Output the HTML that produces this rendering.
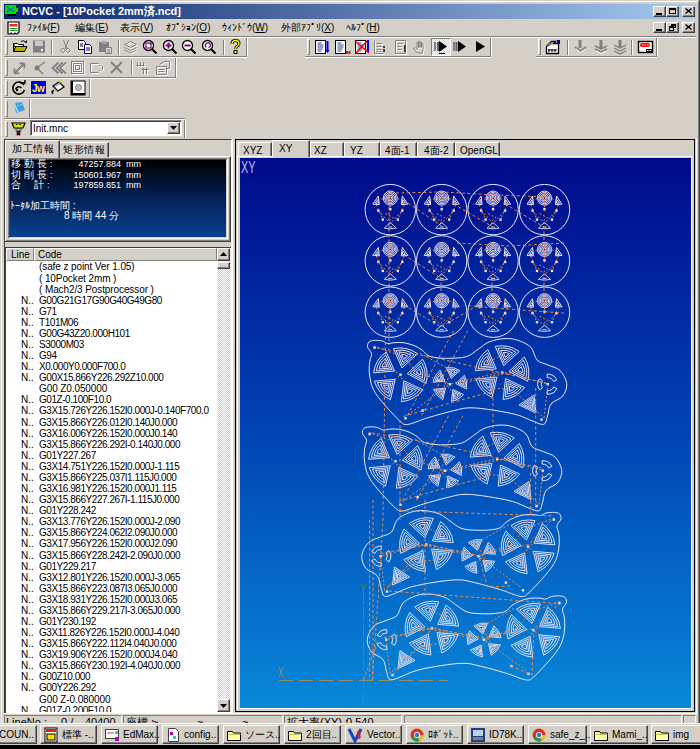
<!DOCTYPE html>
<html><head><meta charset="utf-8"><style>
html,body{margin:0;padding:0;width:700px;height:749px;overflow:hidden;background:#d4d0c8;}
body{position:relative;font-family:"Liberation Sans",sans-serif;}
.t{position:absolute;white-space:pre;font-size:11px;line-height:12px;color:#000;}
svg{overflow:visible}
</style></head><body>
<div style="position:absolute;left:0px;top:0px;width:700px;height:1px;background:#d4d0c8"></div><div style="position:absolute;left:1px;top:1px;width:698px;height:1px;background:#fff"></div><div style="position:absolute;left:1px;top:1px;width:1px;height:723px;background:#fff"></div><div style="position:absolute;left:698px;top:1px;width:1px;height:723px;background:#808080"></div><div style="position:absolute;left:699px;top:0px;width:1px;height:724px;background:#404040"></div><div style="position:absolute;left:4px;top:4px;width:692px;height:15px;background:linear-gradient(to right,#0a246a,#a6caf0)"></div><svg style="position:absolute;left:5px;top:5px" width="15" height="13" viewBox="0 0 15 13"><rect x="0" y="0" width="11" height="9" fill="#00e000"/><rect x="11" y="3" width="2" height="4" fill="#00e000"/><path d="M2 2 L9 7 M9 2 L2 7" stroke="#0060c0" stroke-width="1.2"/><path d="M3 10 h8" stroke="#000" stroke-width="2"/></svg><div class="t" style="left:22px;top:5px;color:#fff;font-weight:bold;font-size:11px;line-height:13px">NCVC - [10Pocket 2mm済.ncd]</div><div style="position:absolute;left:653px;top:6px;width:13px;height:11px;background:#d4d0c8;border-top:1px solid #fff;border-left:1px solid #fff;border-right:1px solid #404040;border-bottom:1px solid #404040;box-sizing:border-box;box-shadow:inset -1px -1px 0 #808080"></div><div style="position:absolute;left:656px;top:13px;width:6px;height:2px;background:#000"></div><div style="position:absolute;left:666px;top:6px;width:13px;height:11px;background:#d4d0c8;border-top:1px solid #fff;border-left:1px solid #fff;border-right:1px solid #404040;border-bottom:1px solid #404040;box-sizing:border-box;box-shadow:inset -1px -1px 0 #808080"></div><div style="position:absolute;left:669px;top:8px;width:7px;height:6px;border:1px solid #000;border-top-width:2px;box-sizing:border-box"></div><div style="position:absolute;left:682px;top:6px;width:13px;height:11px;background:#d4d0c8;border-top:1px solid #fff;border-left:1px solid #fff;border-right:1px solid #404040;border-bottom:1px solid #404040;box-sizing:border-box;box-shadow:inset -1px -1px 0 #808080"></div><svg style="position:absolute;left:685px;top:8px" width="7" height="6" viewBox="0 0 7 6"><path d="M0.5 0.5 L6.5 5.5 M6.5 0.5 L0.5 5.5" stroke="#000" stroke-width="1.5"/></svg><svg style="position:absolute;left:7px;top:21px" width="14" height="14" viewBox="0 0 14 14"><path d="M1 1 h11 v10 l-2 2 h-1 l-1 -1 l-1 1 h-2 l-1 -1 l-1 1 h-2 z" fill="#fff" stroke="#000" stroke-width="1.2"/><rect x="2.5" y="3" width="8" height="2.5" fill="#ff2020"/><rect x="2.5" y="7" width="8" height="1.2" fill="#20a020"/><rect x="2.5" y="9" width="8" height="1" fill="#20a020"/></svg><div class="t" style="left:27px;top:22px;font-size:10px;line-height:11px">ﾌｧｲﾙ(<u>F</u>)</div><div class="t" style="left:75px;top:22px;font-size:10px;line-height:11px">編集(<u>E</u>)</div><div class="t" style="left:120px;top:22px;font-size:10px;line-height:11px">表示(<u>V</u>)</div><div class="t" style="left:166px;top:22px;font-size:10px;line-height:11px">ｵﾌﾟｼｮﾝ(<u>O</u>)</div><div class="t" style="left:222px;top:22px;font-size:10px;line-height:11px">ｳｨﾝﾄﾞｳ(<u>W</u>)</div><div class="t" style="left:281px;top:22px;font-size:10px;line-height:11px">外部ｱﾌﾟﾘ(<u>X</u>)</div><div class="t" style="left:346px;top:22px;font-size:10px;line-height:11px">ﾍﾙﾌﾟ(<u>H</u>)</div><div style="position:absolute;left:653px;top:22px;width:13px;height:11px;background:#d4d0c8;border-top:1px solid #fff;border-left:1px solid #fff;border-right:1px solid #404040;border-bottom:1px solid #404040;box-sizing:border-box;box-shadow:inset -1px -1px 0 #808080"></div><div style="position:absolute;left:656px;top:29px;width:6px;height:2px;background:#000"></div><div style="position:absolute;left:666px;top:22px;width:13px;height:11px;background:#d4d0c8;border-top:1px solid #fff;border-left:1px solid #fff;border-right:1px solid #404040;border-bottom:1px solid #404040;box-sizing:border-box;box-shadow:inset -1px -1px 0 #808080"></div><div style="position:absolute;left:671px;top:24px;width:5px;height:4px;border:1px solid #000;border-top-width:2px;box-sizing:border-box"></div><div style="position:absolute;left:669px;top:26px;width:5px;height:5px;background:#d4d0c8;border:1px solid #000;border-top-width:2px;box-sizing:border-box"></div><div style="position:absolute;left:682px;top:22px;width:13px;height:11px;background:#d4d0c8;border-top:1px solid #fff;border-left:1px solid #fff;border-right:1px solid #404040;border-bottom:1px solid #404040;box-sizing:border-box;box-shadow:inset -1px -1px 0 #808080"></div><svg style="position:absolute;left:685px;top:24px" width="7" height="6" viewBox="0 0 7 6"><path d="M0.5 0.5 L6.5 5.5 M6.5 0.5 L0.5 5.5" stroke="#000" stroke-width="1.5"/></svg><div style="position:absolute;left:4px;top:36px;width:692px;height:1px;background:#808080"></div><div style="position:absolute;left:4px;top:37px;width:692px;height:1px;background:#fff"></div><div style="position:absolute;left:4px;top:56px;width:243px;height:1px;background:#808080"></div><div style="position:absolute;left:4px;top:57px;width:243px;height:1px;background:#fff"></div><div style="position:absolute;left:305px;top:56px;width:186px;height:1px;background:#808080"></div><div style="position:absolute;left:305px;top:57px;width:186px;height:1px;background:#fff"></div><div style="position:absolute;left:536px;top:56px;width:121px;height:1px;background:#808080"></div><div style="position:absolute;left:536px;top:57px;width:121px;height:1px;background:#fff"></div><div style="position:absolute;left:4px;top:77px;width:172px;height:1px;background:#808080"></div><div style="position:absolute;left:4px;top:78px;width:172px;height:1px;background:#fff"></div><div style="position:absolute;left:4px;top:97px;width:86px;height:1px;background:#808080"></div><div style="position:absolute;left:4px;top:98px;width:86px;height:1px;background:#fff"></div><div style="position:absolute;left:4px;top:118px;width:181px;height:1px;background:#808080"></div><div style="position:absolute;left:4px;top:119px;width:181px;height:1px;background:#fff"></div><div style="position:absolute;left:5px;top:39px;width:3px;height:16px;border-left:1px solid #fff;border-top:1px solid #fff;border-right:1px solid #808080;border-bottom:1px solid #808080;box-sizing:border-box"></div><div style="position:absolute;left:5px;top:59px;width:3px;height:17px;border-left:1px solid #fff;border-top:1px solid #fff;border-right:1px solid #808080;border-bottom:1px solid #808080;box-sizing:border-box"></div><div style="position:absolute;left:5px;top:80px;width:3px;height:16px;border-left:1px solid #fff;border-top:1px solid #fff;border-right:1px solid #808080;border-bottom:1px solid #808080;box-sizing:border-box"></div><div style="position:absolute;left:5px;top:100px;width:3px;height:17px;border-left:1px solid #fff;border-top:1px solid #fff;border-right:1px solid #808080;border-bottom:1px solid #808080;box-sizing:border-box"></div><div style="position:absolute;left:5px;top:121px;width:3px;height:16px;border-left:1px solid #fff;border-top:1px solid #fff;border-right:1px solid #808080;border-bottom:1px solid #808080;box-sizing:border-box"></div><div style="position:absolute;left:246px;top:38px;width:1px;height:18px;background:#808080"></div><div style="position:absolute;left:247px;top:38px;width:1px;height:18px;background:#fff"></div><div style="position:absolute;left:307px;top:39px;width:3px;height:16px;border-left:1px solid #fff;border-top:1px solid #fff;border-right:1px solid #808080;border-bottom:1px solid #808080;box-sizing:border-box"></div><div style="position:absolute;left:490px;top:38px;width:1px;height:18px;background:#808080"></div><div style="position:absolute;left:491px;top:38px;width:1px;height:18px;background:#fff"></div><div style="position:absolute;left:538px;top:39px;width:3px;height:16px;border-left:1px solid #fff;border-top:1px solid #fff;border-right:1px solid #808080;border-bottom:1px solid #808080;box-sizing:border-box"></div><div style="position:absolute;left:656px;top:38px;width:1px;height:18px;background:#808080"></div><div style="position:absolute;left:657px;top:38px;width:1px;height:18px;background:#fff"></div><div style="position:absolute;left:175px;top:58px;width:1px;height:19px;background:#808080"></div><div style="position:absolute;left:176px;top:58px;width:1px;height:19px;background:#fff"></div><div style="position:absolute;left:89px;top:79px;width:1px;height:18px;background:#808080"></div><div style="position:absolute;left:90px;top:79px;width:1px;height:18px;background:#fff"></div><div style="position:absolute;left:29px;top:99px;width:1px;height:19px;background:#808080"></div><div style="position:absolute;left:30px;top:99px;width:1px;height:19px;background:#fff"></div><div style="position:absolute;left:184px;top:120px;width:1px;height:18px;background:#808080"></div><div style="position:absolute;left:185px;top:120px;width:1px;height:18px;background:#fff"></div><div style="position:absolute;left:51px;top:40px;width:1px;height:15px;background:#808080"></div><div style="position:absolute;left:52px;top:40px;width:1px;height:15px;background:#fff"></div><div style="position:absolute;left:118px;top:40px;width:1px;height:15px;background:#808080"></div><div style="position:absolute;left:119px;top:40px;width:1px;height:15px;background:#fff"></div><div style="position:absolute;left:223px;top:40px;width:1px;height:15px;background:#808080"></div><div style="position:absolute;left:224px;top:40px;width:1px;height:15px;background:#fff"></div><div style="position:absolute;left:567px;top:40px;width:1px;height:15px;background:#808080"></div><div style="position:absolute;left:568px;top:40px;width:1px;height:15px;background:#fff"></div><div style="position:absolute;left:631px;top:40px;width:1px;height:15px;background:#808080"></div><div style="position:absolute;left:632px;top:40px;width:1px;height:15px;background:#fff"></div><div style="position:absolute;left:131px;top:60px;width:1px;height:15px;background:#808080"></div><div style="position:absolute;left:132px;top:60px;width:1px;height:15px;background:#fff"></div><svg style="position:absolute;left:12px;top:39px" width="16" height="16" viewBox="0 0 16 16"><path d="M1.5 4.5 h4 l1 1 h5 v2 h-9 z" fill="#ffff80" stroke="#000"/><path d="M1.5 12.5 l2.5 -5 h11 l-2.5 5 z" fill="#b0b000" stroke="#000"/><path d="M1.5 4.5 v8" stroke="#000"/><path d="M9 2.5 q3 -2 5 1" stroke="#000" fill="none"/><path d="M13 3 l1.5 0.5 l0 -2" stroke="#000" fill="none"/></svg><svg style="position:absolute;left:31px;top:39px" width="16" height="16" viewBox="0 0 16 16"><rect x="2" y="1.5" width="12" height="12" fill="#808080"/><rect x="4" y="2" width="8" height="5" fill="#c8c8c8"/><rect x="10" y="10" width="2" height="2" fill="#fff"/></svg><svg style="position:absolute;left:58px;top:39px" width="16" height="16" viewBox="0 0 16 16"><path d="M5.5 1 L9 10 M10.5 1 L7 10" stroke="#808080" fill="none"/><circle cx="5.5" cy="12" r="2" fill="none" stroke="#fff" stroke-width="1.2"/><circle cx="10.5" cy="12" r="2" fill="none" stroke="#fff" stroke-width="1.2"/><circle cx="5" cy="11.5" r="2" fill="none" stroke="#808080"/><circle cx="10" cy="11.5" r="2" fill="none" stroke="#808080"/></svg><svg style="position:absolute;left:77px;top:39px" width="16" height="16" viewBox="0 0 16 16"><path d="M1.5 1.5 h5 l2 2 v7 h-7 z" fill="#fff" stroke="#000"/><path d="M3 5 h3 M3 7 h3" stroke="#000"/><path d="M7.5 5.5 h5 l2 2 v7 h-7 z" fill="#fff" stroke="#000080"/><path d="M9 9 h4 M9 11 h4" stroke="#000080"/></svg><svg style="position:absolute;left:97px;top:39px" width="16" height="16" viewBox="0 0 16 16"><path d="M2 3 h10 v10 h-10 z" fill="#808080"/><path d="M5 2 h4 v2 h-4 z" fill="#808080" stroke="#c0c0c0"/><path d="M8.5 8.5 h6 v6 h-6 z" fill="#d8d8d8" stroke="#808080"/><path d="M10 11 h3 M10 13 h3" stroke="#808080"/></svg><svg style="position:absolute;left:123px;top:39px" width="16" height="16" viewBox="0 0 16 16"><g transform="translate(1,1)" fill="none" stroke="#fff"><path d="M1.5 5.5 l6 -3 l6 3 l-6 3 z M1.5 8.5 l6 3 l6 -3 M1.5 11 l6 3 l6 -3"/></g><g fill="none" stroke="#808080"><path d="M1.5 5.5 l6 -3 l6 3 l-6 3 z M1.5 8.5 l6 3 l6 -3 M1.5 11 l6 3 l6 -3"/></g></svg><svg style="position:absolute;left:142px;top:39px" width="16" height="16" viewBox="0 0 16 16"><circle cx="6.5" cy="6.5" r="5" fill="#fff" stroke="#000" stroke-width="1.3"/><path d="M10 10 L14.5 14.5" stroke="#000" stroke-width="2"/><rect x="4" y="4" width="5" height="5" fill="none" stroke="#800080" stroke-width="1.2"/><path d="M7 4 h2 v2 z" fill="#000080"/></svg><svg style="position:absolute;left:162px;top:39px" width="16" height="16" viewBox="0 0 16 16"><circle cx="6.5" cy="6.5" r="5" fill="#fff" stroke="#000" stroke-width="1.3"/><path d="M10 10 L14.5 14.5" stroke="#000" stroke-width="2"/><path d="M3.5 6.5 h6 M6.5 3.5 v6" stroke="#800080" stroke-width="2"/></svg><svg style="position:absolute;left:181px;top:39px" width="16" height="16" viewBox="0 0 16 16"><circle cx="6.5" cy="6.5" r="5" fill="#fff" stroke="#000" stroke-width="1.3"/><path d="M10 10 L14.5 14.5" stroke="#000" stroke-width="2"/><path d="M3.5 6.5 h6" stroke="#800080" stroke-width="2"/></svg><svg style="position:absolute;left:201px;top:39px" width="16" height="16" viewBox="0 0 16 16"><circle cx="6.5" cy="6.5" r="5" fill="#fff" stroke="#000" stroke-width="1.3"/><path d="M10 10 L14.5 14.5" stroke="#000" stroke-width="2"/><path d="M5 8.5 q-2 -3 1 -4.5 q3 -1 3.5 2 q0 2 -2 2.5" stroke="#800080" stroke-width="1.3" fill="none"/></svg><svg style="position:absolute;left:227px;top:39px" width="16" height="16" viewBox="0 0 16 16"><path d="M5 5 q0 -3.5 3.5 -3.5 q3.5 0 3.5 3 q0 1.8 -2 3 q-1.3 0.8 -1.3 2.5" stroke="#000" stroke-width="3" fill="none"/><path d="M5 5 q0 -3.5 3.5 -3.5 q3.5 0 3.5 3 q0 1.8 -2 3 q-1.3 0.8 -1.3 2.5" stroke="#ffff00" stroke-width="1.3" fill="none"/><rect x="7" y="11.5" width="3" height="3" fill="#ffff00" stroke="#000"/></svg><svg style="position:absolute;left:314px;top:39px" width="16" height="16" viewBox="0 0 16 16"><rect x="1.5" y="1.5" width="10" height="13" fill="#fff" stroke="#000"/><path d="M3.5 4 h4 M3.5 6 h6 M3.5 8 h6 M3.5 10 h5 M3.5 12 h4" stroke="#3040a0"/><path d="M13.5 2 v11" stroke="#0000ff" stroke-width="2"/><path d="M11.5 11 l2 3 l2 -3 z" fill="#0000ff"/></svg><svg style="position:absolute;left:334px;top:39px" width="16" height="16" viewBox="0 0 16 16"><rect x="1.5" y="1.5" width="10" height="13" fill="#fff" stroke="#000"/><path d="M3.5 4 h4 M3.5 6 h6 M3.5 8 h6 M3.5 10 h5 M3.5 12 h4" stroke="#3040a0"/><rect x="12" y="12" width="1.8" height="3" fill="#e00000"/><rect x="14.5" y="12" width="1.8" height="3" fill="#e00000"/></svg><svg style="position:absolute;left:354px;top:39px" width="16" height="16" viewBox="0 0 16 16"><rect x="1.5" y="1.5" width="10" height="13" fill="#fff" stroke="#000"/><path d="M3.5 4 h4 M3.5 6 h6 M3.5 8 h6 M3.5 10 h5 M3.5 12 h4" stroke="#3040a0"/><path d="M14 1 v12" stroke="#0000ff" stroke-width="2"/><path d="M1 2 L15 14 M13 2 L2 14" stroke="#ff0000" stroke-width="1.5"/></svg><svg style="position:absolute;left:373px;top:39px" width="16" height="16" viewBox="0 0 16 16"><g transform="translate(1,1)" fill="none" stroke="#fff"><path d="M1.5 1.5 v13 h9 M3.5 4.5 h5 M3.5 7.5 h5 M3.5 10.5 h5 M3.5 12.5 h5"/></g><g fill="none" stroke="#808080"><path d="M1.5 1.5 v13 h9 M3.5 4.5 h5 M3.5 7.5 h5 M3.5 10.5 h5 M3.5 12.5 h5"/></g><rect x="10" y="7" width="2" height="2" fill="#404040"/><rect x="10" y="10" width="2" height="3" fill="#404040"/></svg><svg style="position:absolute;left:393px;top:39px" width="16" height="16" viewBox="0 0 16 16"><g transform="translate(1,1)" fill="none" stroke="#fff"><path d="M2.5 1.5 v13 h10 v-13 h-10 M4.5 4.5 h5 M4.5 7.5 h4 M4.5 10.5 h4"/></g><g fill="none" stroke="#808080"><path d="M2.5 1.5 v13 h10 v-13 h-10 M4.5 4.5 h5 M4.5 7.5 h4 M4.5 10.5 h4"/></g><rect x="11" y="6" width="2" height="7" fill="#404040"/></svg><svg style="position:absolute;left:412px;top:39px" width="16" height="16" viewBox="0 0 16 16"><g transform="translate(1,1)" fill="none" stroke="#fff"><path d="M4.5 13.5 l-3 -4 l1.5 -1 l2 2 v-7 h1.5 v5 v-6 h1.5 v6 v-5 h1.5 v5 v-4 h1.5 v6 l-1 4 z"/></g><g fill="none" stroke="#808080"><path d="M4.5 13.5 l-3 -4 l1.5 -1 l2 2 v-7 h1.5 v5 v-6 h1.5 v6 v-5 h1.5 v5 v-4 h1.5 v6 l-1 4 z"/></g></svg><div style="position:absolute;left:431px;top:38px;width:20px;height:18px;border-top:1px solid #808080;border-left:1px solid #808080;border-right:1px solid #fff;border-bottom:1px solid #fff;box-sizing:border-box;background:repeating-conic-gradient(#fff 0 25%, #d4d0c8 0 50%) 0 0/2px 2px"></div><svg style="position:absolute;left:433px;top:39px" width="16" height="16" viewBox="0 0 16 16"><rect x="1" y="3" width="2" height="9" fill="#808080"/><rect x="4" y="3" width="2" height="9" fill="#606060"/><path d="M6 2 l8 5.5 l-8 5.5 z" fill="#000"/><path d="M6 14.5 h6" stroke="#000"/></svg><svg style="position:absolute;left:452px;top:39px" width="16" height="16" viewBox="0 0 16 16"><rect x="1" y="3" width="2" height="9" fill="#808080"/><rect x="3.5" y="3" width="2" height="9" fill="#606060"/><path d="M6 2 l8 5.5 l-8 5.5 z" fill="#000"/></svg><svg style="position:absolute;left:472px;top:39px" width="16" height="16" viewBox="0 0 16 16"><path d="M4 2 l9 5.5 l-9 5.5 z" fill="#000"/></svg><svg style="position:absolute;left:545px;top:39px" width="16" height="16" viewBox="0 0 16 16"><path d="M1.5 7.5 l5 -5 h4 l-2 2 h5 v10 h-12 z" fill="#fff" stroke="#000" stroke-width="1.3"/><path d="M3 7 l5 -4" stroke="#808080" stroke-width="2"/><rect x="12" y="1" width="3" height="4" fill="#0000a0"/><path d="M3 11 h9" stroke="#808080" stroke-width="2"/><path d="M4 10 v3 M7 10 v3 M10 10 v3" stroke="#000"/></svg><svg style="position:absolute;left:573px;top:39px" width="16" height="16" viewBox="0 0 16 16"><path d="M7 1 v8" stroke="#808080" stroke-width="3"/><path d="M2 8 l5.5 4 l5.5 -4" stroke="#808080" stroke-width="2" fill="none"/><path d="M3 10 l4.5 3.5 l4.5 -3.5" stroke="#fff" fill="none"/></svg><svg style="position:absolute;left:593px;top:39px" width="16" height="16" viewBox="0 0 16 16"><path d="M8 1 v8" stroke="#808080" stroke-width="3"/><path d="M2 7 l6 3 l6 -3 M2 10 l6 3 l6 -3" stroke="#808080" stroke-width="1.5" fill="none"/><path d="M3 12 l5 2.5 l5 -2.5" stroke="#fff" fill="none"/></svg><svg style="position:absolute;left:612px;top:39px" width="16" height="16" viewBox="0 0 16 16"><path d="M8 1 v8" stroke="#808080" stroke-width="3"/><path d="M2 6 l6 3 l6 -3 M2 9 l6 3 l6 -3 M2 12 l6 3 l6 -3" stroke="#808080" stroke-width="1.3" fill="none"/></svg><svg style="position:absolute;left:637px;top:39px" width="16" height="16" viewBox="0 0 16 16"><rect x="1.5" y="2.5" width="14" height="11" fill="#fff" stroke="#000" stroke-width="1.4"/><rect x="3" y="4" width="10" height="4" rx="2" fill="#ff0000"/><path d="M5 6 h1.5 M7.5 6 h1.5 M10 6 h1.5" stroke="#fff"/><rect x="9" y="10" width="6" height="3" fill="#000"/><path d="M10 11.5 h1.5 M12.5 11.5 h1.5" stroke="#fff"/></svg><svg style="position:absolute;left:12px;top:60px" width="16" height="16" viewBox="0 0 16 16"><g transform="translate(1,1)" fill="none" stroke="#fff"><path d="M2.5 13.5 l10 -10 M2.5 13.5 v-5 M2.5 13.5 h5 M12.5 3.5 h-5 M12.5 3.5 v5"/></g><g fill="none" stroke="#808080" stroke-width="2"><path d="M2.5 13.5 l10 -10 M2.5 13.5 v-5 M2.5 13.5 h5 M12.5 3.5 h-5 M12.5 3.5 v5"/></g></svg><svg style="position:absolute;left:32px;top:60px" width="16" height="16" viewBox="0 0 16 16"><circle cx="5" cy="8" r="2.5" fill="#808080"/><path d="M6 7 l7 -5 M6 9 l5 5" stroke="#808080" stroke-width="1.5"/></svg><svg style="position:absolute;left:51px;top:60px" width="16" height="16" viewBox="0 0 16 16"><g transform="translate(1,1)" fill="none" stroke="#fff"><path d="M7.5 2.5 l-6 5.5 l6 5.5 M11.5 2.5 l-6 5.5 l6 5.5 M15 2.5 l-6 5.5 l6 5.5"/></g><g fill="none" stroke="#808080" stroke-width="1.8"><path d="M7.5 2.5 l-6 5.5 l6 5.5 M11.5 2.5 l-6 5.5 l6 5.5 M15 2.5 l-6 5.5 l6 5.5"/></g></svg><svg style="position:absolute;left:70px;top:60px" width="16" height="16" viewBox="0 0 16 16"><g transform="translate(1,1)" fill="none" stroke="#fff"><rect x="1.5" y="1.5" width="12" height="12"/><rect x="3.5" y="3.5" width="8" height="8"/><rect x="5.5" y="5.5" width="4" height="4"/></g><g fill="none" stroke="#808080"><rect x="1.5" y="1.5" width="12" height="12"/><rect x="3.5" y="3.5" width="8" height="8"/><rect x="5.5" y="5.5" width="4" height="4"/></g></svg><svg style="position:absolute;left:89px;top:60px" width="16" height="16" viewBox="0 0 16 16"><g transform="translate(1,1)" fill="none" stroke="#fff"><path d="M1.5 3.5 h8 M1.5 12.5 h8 M1.5 3.5 v9 M10.5 5 v1 M10.5 10 v1 M13.5 6.5 v3"/></g><g fill="none" stroke="#808080"><path d="M1.5 3.5 h8 M1.5 12.5 h8 M1.5 3.5 v9 M10.5 5 v1 M10.5 10 v1 M13.5 6.5 v3"/></g></svg><svg style="position:absolute;left:109px;top:60px" width="16" height="16" viewBox="0 0 16 16"><path d="M2 2 L13 13 M13 2 L2 13" stroke="#808080" stroke-width="2"/></svg><svg style="position:absolute;left:135px;top:60px" width="16" height="16" viewBox="0 0 16 16"><g transform="translate(1,1)" fill="none" stroke="#fff"><path d="M2.5 2.5 v4 M5.5 2.5 v4 M8.5 2.5 v4 M1.5 5.5 h8 M6.5 9.5 h7 M8.5 8 v6 M11.5 8 v6"/></g><g fill="none" stroke="#808080"><path d="M2.5 2.5 v4 M5.5 2.5 v4 M8.5 2.5 v4 M1.5 5.5 h8 M6.5 9.5 h7 M8.5 8 v6 M11.5 8 v6"/></g></svg><svg style="position:absolute;left:155px;top:60px" width="16" height="16" viewBox="0 0 16 16"><g transform="translate(1,1)" fill="none" stroke="#fff"><path d="M4.5 4.5 l5 -3 h5 v7 h-3 M1.5 6.5 h10 v8 h-10 z M3.5 9.5 h6 M3.5 11.5 h6"/></g><g fill="none" stroke="#808080"><path d="M4.5 4.5 l5 -3 h5 v7 h-3 M1.5 6.5 h10 v8 h-10 z M3.5 9.5 h6 M3.5 11.5 h6"/></g></svg><svg style="position:absolute;left:11px;top:80px" width="16" height="16" viewBox="0 0 16 16"><path d="M13 5 A6 6 0 1 0 13.5 10" stroke="#000" stroke-width="1.6" fill="none"/><path d="M10 3 l4 0 l0 -3" stroke="#000" stroke-width="1.4" fill="none"/><path d="M4.5 9 q3 -4 6 -1" stroke="#000" stroke-width="1.6" fill="none"/><circle cx="6" cy="10" r="1.3" fill="#000"/></svg><svg style="position:absolute;left:31px;top:80px" width="16" height="16" viewBox="0 0 16 16"><rect x="0" y="1" width="15" height="13" fill="#0000e0"/><text x="1" y="11.5" font-family="Liberation Sans" font-weight="bold" font-size="10" fill="#ffff00" letter-spacing="-0.5">Jw</text></svg><svg style="position:absolute;left:50px;top:80px" width="16" height="16" viewBox="0 0 16 16"><path d="M3 6 l6 -4 l5 5 l-6 4 z" fill="#fff" stroke="#000" stroke-width="1.3"/><path d="M9 2 l3 -2" stroke="#e0e000" stroke-width="2"/><path d="M4 10 l-2 2 l1 2" stroke="#000" stroke-width="1.5" fill="none"/><path d="M4.5 7 l6 -4" stroke="#808080"/></svg><svg style="position:absolute;left:70px;top:80px" width="16" height="16" viewBox="0 0 16 16"><rect x="1" y="1" width="14" height="14" fill="#fff" stroke="#000" stroke-width="1"/><rect x="1" y="1" width="2" height="14" fill="#000"/><rect x="1" y="13" width="14" height="2" fill="#000"/><circle cx="8.5" cy="7.5" r="3" fill="#c0c0c0" stroke="#808080"/></svg><svg style="position:absolute;left:11px;top:100px" width="16" height="16" viewBox="0 0 16 16"><path d="M3 3 l8 -1 l3 8 l-9 3 z" fill="#40a0e0"/><path d="M3 3 l4 9" stroke="#a0e0ff" stroke-width="1.5"/><path d="M6 6 l6 -2" stroke="#80c8f8"/></svg><svg style="position:absolute;left:11px;top:121px" width="16" height="16" viewBox="0 0 16 16"><path d="M1 2 h13 l-2 5 h-9 z" fill="#e0e000" stroke="#000" stroke-width="1.2"/><path d="M5 3.5 h1.5 M8.5 3.5 h1.5" stroke="#000"/><rect x="5" y="8" width="5" height="2" fill="#fff" stroke="#000" stroke-width="0.6"/><rect x="6" y="10" width="3" height="4" fill="#800000" stroke="#000" stroke-width="0.6"/></svg><div style="position:absolute;left:30px;top:120px;width:152px;height:16px;background:#fff;border-top:1px solid #808080;border-left:1px solid #808080;border-right:1px solid #fff;border-bottom:1px solid #fff;box-sizing:border-box;box-shadow:inset 1px 1px 0 #404040"></div><div style="position:absolute;left:167px;top:122px;width:13px;height:12px;background:#d4d0c8;border-top:1px solid #fff;border-left:1px solid #fff;border-right:1px solid #404040;border-bottom:1px solid #404040;box-sizing:border-box;box-shadow:inset -1px -1px 0 #808080"></div><svg style="position:absolute;left:170px;top:126px" width="7" height="4" viewBox="0 0 7 4"><path d="M0 0 h7 l-3.5 4 z" fill="#000"/></svg><div class="t" style="left:33px;top:123px;font-size:10px;line-height:11px">Init.mnc</div><div style="position:absolute;left:4px;top:139px;width:228px;height:575px;border-top:1px solid #404040;border-left:1px solid #404040;border-right:1px solid #fff;border-bottom:1px solid #fff;box-sizing:border-box"></div><div style="position:absolute;left:5px;top:156px;width:226px;height:86px;background:#d4d0c8;border-top:1px solid #fff;border-left:1px solid #fff;border-right:1px solid #404040;border-bottom:1px solid #404040;box-sizing:border-box;box-shadow:inset -1px -1px 0 #808080"></div><div style="position:absolute;left:59px;top:142px;width:50px;height:15px;background:#d4d0c8;border-top:1px solid #fff;border-left:1px solid #fff;border-right:1px solid #404040;box-sizing:border-box;box-shadow:inset -1px 0 0 #808080"></div><div class="t" style="left:63px;top:145px;font-size:10px;line-height:10px;letter-spacing:0.5px">矩形情報</div><div style="position:absolute;left:5px;top:140px;width:55px;height:18px;background:#d4d0c8;border-top:1px solid #fff;border-left:1px solid #fff;border-right:1px solid #404040;box-sizing:border-box;box-shadow:inset -1px 0 0 #808080"></div><div class="t" style="left:12px;top:143.5px;font-size:10px;line-height:10px;letter-spacing:0.5px">加工情報</div><div style="position:absolute;left:8px;top:158px;width:220px;height:81px;border-top:1px solid #808080;border-left:1px solid #808080;border-right:1px solid #fff;border-bottom:1px solid #fff;box-sizing:border-box"></div><div style="position:absolute;left:9px;top:159px;width:218px;height:79px;border-top:1px solid #404040;border-left:1px solid #404040;border-right:1px solid #d4d0c8;border-bottom:1px solid #d4d0c8;box-sizing:border-box"></div><div style="position:absolute;left:10px;top:160px;width:216px;height:77px;background:linear-gradient(to bottom,#000000 0%,#001e50 45%,#0a4290 100%)"></div><div class="t" style="left:10.5px;top:159.0px;color:#fff;font-size:10px;line-height:10px">移</div><div class="t" style="left:23.5px;top:159.0px;color:#fff;font-size:10px;line-height:10px">動</div><div class="t" style="left:37px;top:159.0px;color:#fff;font-size:10px;line-height:10px">長</div><div class="t" style="left:50px;top:159.0px;color:#fff;font-size:9px;line-height:10px">:</div><div class="t" style="right:579px;top:159.0px;color:#fff;font-size:9px;line-height:10px">47257.884</div><div class="t" style="left:126px;top:159.0px;color:#fff;font-size:9px;line-height:10px">mm</div><div class="t" style="left:10.5px;top:169.5px;color:#fff;font-size:10px;line-height:10px">切</div><div class="t" style="left:23.5px;top:169.5px;color:#fff;font-size:10px;line-height:10px">削</div><div class="t" style="left:37px;top:169.5px;color:#fff;font-size:10px;line-height:10px">長</div><div class="t" style="left:50px;top:169.5px;color:#fff;font-size:9px;line-height:10px">:</div><div class="t" style="right:579px;top:169.5px;color:#fff;font-size:9px;line-height:10px">150601.967</div><div class="t" style="left:126px;top:169.5px;color:#fff;font-size:9px;line-height:10px">mm</div><div class="t" style="left:10.5px;top:180px;color:#fff;font-size:10px;line-height:10px">合</div><div class="t" style="left:33.5px;top:180px;color:#fff;font-size:10px;line-height:10px">計</div><div class="t" style="left:47px;top:180px;color:#fff;font-size:9px;line-height:10px">:</div><div class="t" style="right:579px;top:180px;color:#fff;font-size:9px;line-height:10px">197859.851</div><div class="t" style="left:126px;top:180px;color:#fff;font-size:9px;line-height:10px">mm</div><div class="t" style="left:10px;top:200.5px;color:#fff;font-size:10px;line-height:10px">ﾄｰﾀﾙ加工時間 :</div><div class="t" style="left:64px;top:211px;color:#fff;font-size:10px;line-height:10px">8 時間 44 分</div><div style="position:absolute;left:5px;top:241px;width:226px;height:1px;background:#404040"></div><div style="position:absolute;left:5px;top:247px;width:226px;height:466px;background:#fff;border-top:1px solid #404040;border-left:1px solid #404040;box-sizing:border-box"></div><div style="position:absolute;left:6px;top:248px;width:28px;height:13px;background:#d4d0c8;border-top:1px solid #fff;border-left:1px solid #fff;border-right:1px solid #808080;border-bottom:1px solid #808080;box-sizing:border-box"></div><div style="position:absolute;left:34px;top:248px;width:183px;height:13px;background:#d4d0c8;border-top:1px solid #fff;border-left:1px solid #fff;border-right:1px solid #808080;border-bottom:1px solid #808080;box-sizing:border-box"></div><div class="t" style="left:11px;top:250px;font-size:10px;line-height:10px">Line</div><div class="t" style="left:38px;top:250px;font-size:10px;line-height:10px">Code</div><div style="position:absolute;left:217px;top:248px;width:14px;height:464px;background:repeating-conic-gradient(#fff 0 25%, #d4d0c8 0 50%) 0 0/2px 2px"></div><div style="position:absolute;left:217px;top:248px;width:13px;height:13px;background:#d4d0c8;border-top:1px solid #fff;border-left:1px solid #fff;border-right:1px solid #404040;border-bottom:1px solid #404040;box-sizing:border-box;box-shadow:inset -1px -1px 0 #808080"></div><svg style="position:absolute;left:220px;top:252px" width="7" height="4" viewBox="0 0 7 4"><path d="M0 4 h7 l-3.5 -4 z" fill="#000"/></svg><div style="position:absolute;left:217px;top:262px;width:13px;height:7px;background:#d4d0c8;border-top:1px solid #fff;border-left:1px solid #fff;border-right:1px solid #404040;border-bottom:1px solid #404040;box-sizing:border-box;box-shadow:inset -1px -1px 0 #808080"></div><div style="position:absolute;left:217px;top:699px;width:13px;height:13px;background:#d4d0c8;border-top:1px solid #fff;border-left:1px solid #fff;border-right:1px solid #404040;border-bottom:1px solid #404040;box-sizing:border-box;box-shadow:inset -1px -1px 0 #808080"></div><svg style="position:absolute;left:220px;top:704px" width="7" height="4" viewBox="0 0 7 4"><path d="M0 0 h7 l-3.5 4 z" fill="#000"/></svg><div style="position:absolute;left:6px;top:261px;width:211px;height:451px;overflow:hidden"><div class="t" style="left:33px;top:0.4px;font-size:10px;line-height:11px;letter-spacing:-0.1px">(safe z point Ver 1.05)</div><div class="t" style="left:33px;top:11.5px;font-size:10px;line-height:11px;letter-spacing:-0.1px">( 10Pocket 2mm )</div><div class="t" style="left:33px;top:22.6px;font-size:10px;line-height:11px;letter-spacing:-0.1px">( Mach2/3 Postprocessor )</div><div class="t" style="left:15px;top:33.6px;font-size:10px;line-height:11px;letter-spacing:0px">N..</div><div class="t" style="left:33px;top:33.6px;font-size:10px;line-height:11px;letter-spacing:-0.45px">G00G21G17G90G40G49G80</div><div class="t" style="left:15px;top:44.7px;font-size:10px;line-height:11px;letter-spacing:0px">N..</div><div class="t" style="left:33px;top:44.7px;font-size:10px;line-height:11px;letter-spacing:-0.45px">G71</div><div class="t" style="left:15px;top:55.8px;font-size:10px;line-height:11px;letter-spacing:0px">N..</div><div class="t" style="left:33px;top:55.8px;font-size:10px;line-height:11px;letter-spacing:-0.45px">T101M06</div><div class="t" style="left:15px;top:66.9px;font-size:10px;line-height:11px;letter-spacing:0px">N..</div><div class="t" style="left:33px;top:66.9px;font-size:10px;line-height:11px;letter-spacing:-0.45px">G00G43Z20.000H101</div><div class="t" style="left:15px;top:78.0px;font-size:10px;line-height:11px;letter-spacing:0px">N..</div><div class="t" style="left:33px;top:78.0px;font-size:10px;line-height:11px;letter-spacing:-0.45px">S3000M03</div><div class="t" style="left:15px;top:89.0px;font-size:10px;line-height:11px;letter-spacing:0px">N..</div><div class="t" style="left:33px;top:89.0px;font-size:10px;line-height:11px;letter-spacing:-0.45px">G94</div><div class="t" style="left:15px;top:100.1px;font-size:10px;line-height:11px;letter-spacing:0px">N..</div><div class="t" style="left:33px;top:100.1px;font-size:10px;line-height:11px;letter-spacing:-0.45px">X0.000Y0.000F700.0</div><div class="t" style="left:15px;top:111.2px;font-size:10px;line-height:11px;letter-spacing:0px">N..</div><div class="t" style="left:33px;top:111.2px;font-size:10px;line-height:11px;letter-spacing:-0.45px">G00X15.866Y226.292Z10.000</div><div class="t" style="left:33px;top:122.3px;font-size:10px;line-height:11px;letter-spacing:-0.1px">G00 Z0.050000</div><div class="t" style="left:15px;top:133.4px;font-size:10px;line-height:11px;letter-spacing:0px">N..</div><div class="t" style="left:33px;top:133.4px;font-size:10px;line-height:11px;letter-spacing:-0.45px">G01Z-0.100F10.0</div><div class="t" style="left:15px;top:144.4px;font-size:10px;line-height:11px;letter-spacing:0px">N..</div><div class="t" style="left:33px;top:144.4px;font-size:10px;line-height:11px;letter-spacing:-0.45px">G3X15.726Y226.152I0.000J-0.140F700.0</div><div class="t" style="left:15px;top:155.5px;font-size:10px;line-height:11px;letter-spacing:0px">N..</div><div class="t" style="left:33px;top:155.5px;font-size:10px;line-height:11px;letter-spacing:-0.45px">G3X15.866Y226.012I0.140J0.000</div><div class="t" style="left:15px;top:166.6px;font-size:10px;line-height:11px;letter-spacing:0px">N..</div><div class="t" style="left:33px;top:166.6px;font-size:10px;line-height:11px;letter-spacing:-0.45px">G3X16.006Y226.152I0.000J0.140</div><div class="t" style="left:15px;top:177.7px;font-size:10px;line-height:11px;letter-spacing:0px">N..</div><div class="t" style="left:33px;top:177.7px;font-size:10px;line-height:11px;letter-spacing:-0.45px">G3X15.866Y226.292I-0.140J0.000</div><div class="t" style="left:15px;top:188.8px;font-size:10px;line-height:11px;letter-spacing:0px">N..</div><div class="t" style="left:33px;top:188.8px;font-size:10px;line-height:11px;letter-spacing:-0.45px">G01Y227.267</div><div class="t" style="left:15px;top:199.8px;font-size:10px;line-height:11px;letter-spacing:0px">N..</div><div class="t" style="left:33px;top:199.8px;font-size:10px;line-height:11px;letter-spacing:-0.45px">G3X14.751Y226.152I0.000J-1.115</div><div class="t" style="left:15px;top:210.9px;font-size:10px;line-height:11px;letter-spacing:0px">N..</div><div class="t" style="left:33px;top:210.9px;font-size:10px;line-height:11px;letter-spacing:-0.45px">G3X15.866Y225.037I1.115J0.000</div><div class="t" style="left:15px;top:222.0px;font-size:10px;line-height:11px;letter-spacing:0px">N..</div><div class="t" style="left:33px;top:222.0px;font-size:10px;line-height:11px;letter-spacing:-0.45px">G3X16.981Y226.152I0.000J1.115</div><div class="t" style="left:15px;top:233.1px;font-size:10px;line-height:11px;letter-spacing:0px">N..</div><div class="t" style="left:33px;top:233.1px;font-size:10px;line-height:11px;letter-spacing:-0.45px">G3X15.866Y227.267I-1.115J0.000</div><div class="t" style="left:15px;top:244.2px;font-size:10px;line-height:11px;letter-spacing:0px">N..</div><div class="t" style="left:33px;top:244.2px;font-size:10px;line-height:11px;letter-spacing:-0.45px">G01Y228.242</div><div class="t" style="left:15px;top:255.2px;font-size:10px;line-height:11px;letter-spacing:0px">N..</div><div class="t" style="left:33px;top:255.2px;font-size:10px;line-height:11px;letter-spacing:-0.45px">G3X13.776Y226.152I0.000J-2.090</div><div class="t" style="left:15px;top:266.3px;font-size:10px;line-height:11px;letter-spacing:0px">N..</div><div class="t" style="left:33px;top:266.3px;font-size:10px;line-height:11px;letter-spacing:-0.45px">G3X15.866Y224.062I2.090J0.000</div><div class="t" style="left:15px;top:277.4px;font-size:10px;line-height:11px;letter-spacing:0px">N..</div><div class="t" style="left:33px;top:277.4px;font-size:10px;line-height:11px;letter-spacing:-0.45px">G3X17.956Y226.152I0.000J2.090</div><div class="t" style="left:15px;top:288.5px;font-size:10px;line-height:11px;letter-spacing:0px">N..</div><div class="t" style="left:33px;top:288.5px;font-size:10px;line-height:11px;letter-spacing:-0.45px">G3X15.866Y228.242I-2.090J0.000</div><div class="t" style="left:15px;top:299.6px;font-size:10px;line-height:11px;letter-spacing:0px">N..</div><div class="t" style="left:33px;top:299.6px;font-size:10px;line-height:11px;letter-spacing:-0.45px">G01Y229.217</div><div class="t" style="left:15px;top:310.6px;font-size:10px;line-height:11px;letter-spacing:0px">N..</div><div class="t" style="left:33px;top:310.6px;font-size:10px;line-height:11px;letter-spacing:-0.45px">G3X12.801Y226.152I0.000J-3.065</div><div class="t" style="left:15px;top:321.7px;font-size:10px;line-height:11px;letter-spacing:0px">N..</div><div class="t" style="left:33px;top:321.7px;font-size:10px;line-height:11px;letter-spacing:-0.45px">G3X15.866Y223.087I3.065J0.000</div><div class="t" style="left:15px;top:332.8px;font-size:10px;line-height:11px;letter-spacing:0px">N..</div><div class="t" style="left:33px;top:332.8px;font-size:10px;line-height:11px;letter-spacing:-0.45px">G3X18.931Y226.152I0.000J3.065</div><div class="t" style="left:15px;top:343.9px;font-size:10px;line-height:11px;letter-spacing:0px">N..</div><div class="t" style="left:33px;top:343.9px;font-size:10px;line-height:11px;letter-spacing:-0.45px">G3X15.866Y229.217I-3.065J0.000</div><div class="t" style="left:15px;top:355.0px;font-size:10px;line-height:11px;letter-spacing:0px">N..</div><div class="t" style="left:33px;top:355.0px;font-size:10px;line-height:11px;letter-spacing:-0.45px">G01Y230.192</div><div class="t" style="left:15px;top:366.0px;font-size:10px;line-height:11px;letter-spacing:0px">N..</div><div class="t" style="left:33px;top:366.0px;font-size:10px;line-height:11px;letter-spacing:-0.45px">G3X11.826Y226.152I0.000J-4.040</div><div class="t" style="left:15px;top:377.1px;font-size:10px;line-height:11px;letter-spacing:0px">N..</div><div class="t" style="left:33px;top:377.1px;font-size:10px;line-height:11px;letter-spacing:-0.45px">G3X15.866Y222.112I4.040J0.000</div><div class="t" style="left:15px;top:388.2px;font-size:10px;line-height:11px;letter-spacing:0px">N..</div><div class="t" style="left:33px;top:388.2px;font-size:10px;line-height:11px;letter-spacing:-0.45px">G3X19.906Y226.152I0.000J4.040</div><div class="t" style="left:15px;top:399.3px;font-size:10px;line-height:11px;letter-spacing:0px">N..</div><div class="t" style="left:33px;top:399.3px;font-size:10px;line-height:11px;letter-spacing:-0.45px">G3X15.866Y230.192I-4.040J0.000</div><div class="t" style="left:15px;top:410.4px;font-size:10px;line-height:11px;letter-spacing:0px">N..</div><div class="t" style="left:33px;top:410.4px;font-size:10px;line-height:11px;letter-spacing:-0.45px">G00Z10.000</div><div class="t" style="left:15px;top:421.4px;font-size:10px;line-height:11px;letter-spacing:0px">N..</div><div class="t" style="left:33px;top:421.4px;font-size:10px;line-height:11px;letter-spacing:-0.45px">G00Y226.292</div><div class="t" style="left:33px;top:432.5px;font-size:10px;line-height:11px;letter-spacing:-0.1px">G00 Z-0.080000</div><div class="t" style="left:15px;top:443.6px;font-size:10px;line-height:11px;letter-spacing:0px">N..</div><div class="t" style="left:33px;top:443.6px;font-size:10px;line-height:11px;letter-spacing:-0.45px">G01Z-0.200F10.0</div></div><div style="position:absolute;left:235px;top:139px;width:460px;height:1px;background:#000"></div><div style="position:absolute;left:235px;top:139px;width:1px;height:573px;background:#000"></div><div style="position:absolute;left:694px;top:139px;width:1px;height:573px;background:#000"></div><div style="position:absolute;left:235px;top:711px;width:460px;height:1px;background:#000"></div><div style="position:absolute;left:696px;top:139px;width:1px;height:575px;background:#fff"></div><div style="position:absolute;left:4px;top:713px;width:693px;height:1px;background:#fff"></div><div style="position:absolute;left:232px;top:139px;width:1px;height:574px;background:#fff"></div><div style="position:absolute;left:237px;top:156px;width:456px;height:1px;background:#fff"></div><div style="position:absolute;left:237px;top:156px;width:1px;height:554px;background:#fff"></div><div style="position:absolute;left:691px;top:158px;width:1px;height:551px;background:#fff"></div><div style="position:absolute;left:240px;top:708px;width:452px;height:1px;background:#fff"></div><div style="position:absolute;left:240px;top:158px;width:451px;height:550px;background:linear-gradient(to bottom,#000a8c 0%,#0044b4 50%,#0888d8 100%)"></div><div class="t" style="left:240.5px;top:160px;color:#b8b8f0;font-size:16px;line-height:16px;transform:scaleX(0.68);transform-origin:0 0">XY</div><div style="position:absolute;left:238px;top:142px;width:34px;height:14px;background:#d4d0c8;border-top:1px solid #fff;border-left:1px solid #fff;border-right:1px solid #404040;box-sizing:border-box;box-shadow:inset -1px 0 0 #808080"></div><div class="t" style="left:243px;top:145px;font-size:10px;line-height:11px">XYZ</div><div style="position:absolute;left:310px;top:142px;width:34px;height:14px;background:#d4d0c8;border-top:1px solid #fff;border-left:1px solid #fff;border-right:1px solid #404040;box-sizing:border-box;box-shadow:inset -1px 0 0 #808080"></div><div class="t" style="left:314px;top:145px;font-size:10px;line-height:11px">XZ</div><div style="position:absolute;left:344px;top:142px;width:36px;height:14px;background:#d4d0c8;border-top:1px solid #fff;border-left:1px solid #fff;border-right:1px solid #404040;box-sizing:border-box;box-shadow:inset -1px 0 0 #808080"></div><div class="t" style="left:350px;top:145px;font-size:10px;line-height:11px">YZ</div><div style="position:absolute;left:380px;top:142px;width:37px;height:14px;background:#d4d0c8;border-top:1px solid #fff;border-left:1px solid #fff;border-right:1px solid #404040;box-sizing:border-box;box-shadow:inset -1px 0 0 #808080"></div><div class="t" style="left:385px;top:145px;font-size:10px;line-height:11px">4面-1</div><div style="position:absolute;left:417px;top:142px;width:38px;height:14px;background:#d4d0c8;border-top:1px solid #fff;border-left:1px solid #fff;border-right:1px solid #404040;box-sizing:border-box;box-shadow:inset -1px 0 0 #808080"></div><div class="t" style="left:424px;top:145px;font-size:10px;line-height:11px">4面-2</div><div style="position:absolute;left:455px;top:142px;width:45px;height:14px;background:#d4d0c8;border-top:1px solid #fff;border-left:1px solid #fff;border-right:1px solid #404040;box-sizing:border-box;box-shadow:inset -1px 0 0 #808080"></div><div class="t" style="left:460px;top:145px;font-size:10px;line-height:11px">OpenGL</div><div style="position:absolute;left:272px;top:140px;width:38px;height:17px;background:#d4d0c8;border-top:1px solid #fff;border-left:1px solid #fff;border-right:1px solid #404040;box-sizing:border-box;box-shadow:inset -1px 0 0 #808080"></div><div class="t" style="left:279px;top:143px;font-size:10px;line-height:11px">XY</div><svg style="position:absolute;left:240px;top:158px" width="451" height="550" viewBox="240 158 451 550"><g><circle cx="390.3" cy="209.6" r="25.2" fill="none" stroke="#e8e8ff" stroke-width="1"/><circle cx="390.3" cy="198.1" r="7" fill="none" stroke="#e8e8ff" stroke-width="1"/><circle cx="390.3" cy="198.1" r="5.6" fill="none" stroke="#e8e8ff" stroke-width="1"/><circle cx="390.3" cy="198.1" r="4.2" fill="none" stroke="#e8e8ff" stroke-width="1"/><circle cx="390.3" cy="198.1" r="2.8" fill="none" stroke="#e8e8ff" stroke-width="1"/><circle cx="390.3" cy="198.1" r="1.4" fill="none" stroke="#e8e8ff" stroke-width="1"/><path d="M384.3 198.1h12M390.3 192.1v12" stroke="#ff9040" stroke-width="0.8" stroke-dasharray="2 1.5"/><path d="M378.3 196.1 L372.8 204.1 L379.3 204.6Z M377.8 199.6 L375.3 203.1 L378.3 203.1Z" fill="none" stroke="#e8e8ff" stroke-width="1"/><path d="M402.3 196.1 L407.8 204.1 L401.3 204.6Z M402.8 199.6 L405.3 203.1 L402.3 203.1Z" fill="none" stroke="#e8e8ff" stroke-width="1"/><rect x="377.1" y="209.4" width="2.4" height="2.4" fill="#e8e8ff"/><rect x="389.1" y="207.9" width="2.4" height="2.4" fill="#e8e8ff"/><rect x="401.1" y="209.4" width="2.4" height="2.4" fill="#e8e8ff"/><rect x="381.6" y="218.4" width="2.4" height="2.4" fill="#e8e8ff"/><rect x="396.6" y="218.4" width="2.4" height="2.4" fill="#e8e8ff"/><path d="M384.3 228.1 Q387.3 225.1 390.3 222.6 Q393.3 225.1 396.3 228.1 Q390.3 229.6 384.3 228.1Z M388.3 227.1h4" fill="none" stroke="#e8e8ff" stroke-width="0.9"/><path d="M390.3 205.1 V211.6 M385.3 213.6 L393.3 217.6 L388.3 221.6 M378.3 210.6 L390.3 223.6 L402.3 210.6 M376.3 204.6 L382.8 219.6 M404.3 204.6 L397.8 219.6 M383.3 198.6 L376.3 200.6 M397.3 198.6 L404.3 200.6" fill="none" stroke="#ff9040" stroke-width="0.9" stroke-dasharray="2 2"/><circle cx="441.7" cy="209.6" r="25.2" fill="none" stroke="#e8e8ff" stroke-width="1"/><circle cx="441.7" cy="198.1" r="7" fill="none" stroke="#e8e8ff" stroke-width="1"/><circle cx="441.7" cy="198.1" r="5.6" fill="none" stroke="#e8e8ff" stroke-width="1"/><circle cx="441.7" cy="198.1" r="4.2" fill="none" stroke="#e8e8ff" stroke-width="1"/><circle cx="441.7" cy="198.1" r="2.8" fill="none" stroke="#e8e8ff" stroke-width="1"/><circle cx="441.7" cy="198.1" r="1.4" fill="none" stroke="#e8e8ff" stroke-width="1"/><path d="M435.7 198.1h12M441.7 192.1v12" stroke="#ff9040" stroke-width="0.8" stroke-dasharray="2 1.5"/><path d="M429.7 196.1 L424.2 204.1 L430.7 204.6Z M429.2 199.6 L426.7 203.1 L429.7 203.1Z" fill="none" stroke="#e8e8ff" stroke-width="1"/><path d="M453.7 196.1 L459.2 204.1 L452.7 204.6Z M454.2 199.6 L456.7 203.1 L453.7 203.1Z" fill="none" stroke="#e8e8ff" stroke-width="1"/><rect x="428.5" y="209.4" width="2.4" height="2.4" fill="#e8e8ff"/><rect x="440.5" y="207.9" width="2.4" height="2.4" fill="#e8e8ff"/><rect x="452.5" y="209.4" width="2.4" height="2.4" fill="#e8e8ff"/><rect x="433.0" y="218.4" width="2.4" height="2.4" fill="#e8e8ff"/><rect x="448.0" y="218.4" width="2.4" height="2.4" fill="#e8e8ff"/><path d="M435.7 228.1 Q438.7 225.1 441.7 222.6 Q444.7 225.1 447.7 228.1 Q441.7 229.6 435.7 228.1Z M439.7 227.1h4" fill="none" stroke="#e8e8ff" stroke-width="0.9"/><path d="M441.7 205.1 V211.6 M436.7 213.6 L444.7 217.6 L439.7 221.6 M429.7 210.6 L441.7 223.6 L453.7 210.6 M427.7 204.6 L434.2 219.6 M455.7 204.6 L449.2 219.6 M434.7 198.6 L427.7 200.6 M448.7 198.6 L455.7 200.6" fill="none" stroke="#ff9040" stroke-width="0.9" stroke-dasharray="2 2"/><circle cx="493.1" cy="209.6" r="25.2" fill="none" stroke="#e8e8ff" stroke-width="1"/><circle cx="493.1" cy="198.1" r="7" fill="none" stroke="#e8e8ff" stroke-width="1"/><circle cx="493.1" cy="198.1" r="5.6" fill="none" stroke="#e8e8ff" stroke-width="1"/><circle cx="493.1" cy="198.1" r="4.2" fill="none" stroke="#e8e8ff" stroke-width="1"/><circle cx="493.1" cy="198.1" r="2.8" fill="none" stroke="#e8e8ff" stroke-width="1"/><circle cx="493.1" cy="198.1" r="1.4" fill="none" stroke="#e8e8ff" stroke-width="1"/><path d="M487.1 198.1h12M493.1 192.1v12" stroke="#ff9040" stroke-width="0.8" stroke-dasharray="2 1.5"/><path d="M481.1 196.1 L475.6 204.1 L482.1 204.6Z M480.6 199.6 L478.1 203.1 L481.1 203.1Z" fill="none" stroke="#e8e8ff" stroke-width="1"/><path d="M505.1 196.1 L510.6 204.1 L504.1 204.6Z M505.6 199.6 L508.1 203.1 L505.1 203.1Z" fill="none" stroke="#e8e8ff" stroke-width="1"/><rect x="479.9" y="209.4" width="2.4" height="2.4" fill="#e8e8ff"/><rect x="491.9" y="207.9" width="2.4" height="2.4" fill="#e8e8ff"/><rect x="503.9" y="209.4" width="2.4" height="2.4" fill="#e8e8ff"/><rect x="484.4" y="218.4" width="2.4" height="2.4" fill="#e8e8ff"/><rect x="499.4" y="218.4" width="2.4" height="2.4" fill="#e8e8ff"/><path d="M487.1 228.1 Q490.1 225.1 493.1 222.6 Q496.1 225.1 499.1 228.1 Q493.1 229.6 487.1 228.1Z M491.1 227.1h4" fill="none" stroke="#e8e8ff" stroke-width="0.9"/><path d="M493.1 205.1 V211.6 M488.1 213.6 L496.1 217.6 L491.1 221.6 M481.1 210.6 L493.1 223.6 L505.1 210.6 M479.1 204.6 L485.6 219.6 M507.1 204.6 L500.6 219.6 M486.1 198.6 L479.1 200.6 M500.1 198.6 L507.1 200.6" fill="none" stroke="#ff9040" stroke-width="0.9" stroke-dasharray="2 2"/><circle cx="544.5" cy="209.6" r="25.2" fill="none" stroke="#e8e8ff" stroke-width="1"/><circle cx="544.5" cy="198.1" r="7" fill="none" stroke="#e8e8ff" stroke-width="1"/><circle cx="544.5" cy="198.1" r="5.6" fill="none" stroke="#e8e8ff" stroke-width="1"/><circle cx="544.5" cy="198.1" r="4.2" fill="none" stroke="#e8e8ff" stroke-width="1"/><circle cx="544.5" cy="198.1" r="2.8" fill="none" stroke="#e8e8ff" stroke-width="1"/><circle cx="544.5" cy="198.1" r="1.4" fill="none" stroke="#e8e8ff" stroke-width="1"/><path d="M538.5 198.1h12M544.5 192.1v12" stroke="#ff9040" stroke-width="0.8" stroke-dasharray="2 1.5"/><path d="M532.5 196.1 L527.0 204.1 L533.5 204.6Z M532.0 199.6 L529.5 203.1 L532.5 203.1Z" fill="none" stroke="#e8e8ff" stroke-width="1"/><path d="M556.5 196.1 L562.0 204.1 L555.5 204.6Z M557.0 199.6 L559.5 203.1 L556.5 203.1Z" fill="none" stroke="#e8e8ff" stroke-width="1"/><rect x="531.3" y="209.4" width="2.4" height="2.4" fill="#e8e8ff"/><rect x="543.3" y="207.9" width="2.4" height="2.4" fill="#e8e8ff"/><rect x="555.3" y="209.4" width="2.4" height="2.4" fill="#e8e8ff"/><rect x="535.8" y="218.4" width="2.4" height="2.4" fill="#e8e8ff"/><rect x="550.8" y="218.4" width="2.4" height="2.4" fill="#e8e8ff"/><path d="M538.5 228.1 Q541.5 225.1 544.5 222.6 Q547.5 225.1 550.5 228.1 Q544.5 229.6 538.5 228.1Z M542.5 227.1h4" fill="none" stroke="#e8e8ff" stroke-width="0.9"/><path d="M544.5 205.1 V211.6 M539.5 213.6 L547.5 217.6 L542.5 221.6 M532.5 210.6 L544.5 223.6 L556.5 210.6 M530.5 204.6 L537.0 219.6 M558.5 204.6 L552.0 219.6 M537.5 198.6 L530.5 200.6 M551.5 198.6 L558.5 200.6" fill="none" stroke="#ff9040" stroke-width="0.9" stroke-dasharray="2 2"/><circle cx="390.3" cy="260.9" r="25.2" fill="none" stroke="#e8e8ff" stroke-width="1"/><circle cx="390.3" cy="249.4" r="7" fill="none" stroke="#e8e8ff" stroke-width="1"/><circle cx="390.3" cy="249.4" r="5.6" fill="none" stroke="#e8e8ff" stroke-width="1"/><circle cx="390.3" cy="249.4" r="4.2" fill="none" stroke="#e8e8ff" stroke-width="1"/><circle cx="390.3" cy="249.4" r="2.8" fill="none" stroke="#e8e8ff" stroke-width="1"/><circle cx="390.3" cy="249.4" r="1.4" fill="none" stroke="#e8e8ff" stroke-width="1"/><path d="M384.3 249.4h12M390.3 243.4v12" stroke="#ff9040" stroke-width="0.8" stroke-dasharray="2 1.5"/><path d="M378.3 247.4 L372.8 255.4 L379.3 255.9Z M377.8 250.9 L375.3 254.4 L378.3 254.4Z" fill="none" stroke="#e8e8ff" stroke-width="1"/><path d="M402.3 247.4 L407.8 255.4 L401.3 255.9Z M402.8 250.9 L405.3 254.4 L402.3 254.4Z" fill="none" stroke="#e8e8ff" stroke-width="1"/><rect x="377.1" y="260.7" width="2.4" height="2.4" fill="#e8e8ff"/><rect x="389.1" y="259.2" width="2.4" height="2.4" fill="#e8e8ff"/><rect x="401.1" y="260.7" width="2.4" height="2.4" fill="#e8e8ff"/><rect x="381.6" y="269.7" width="2.4" height="2.4" fill="#e8e8ff"/><rect x="396.6" y="269.7" width="2.4" height="2.4" fill="#e8e8ff"/><path d="M384.3 279.4 Q387.3 276.4 390.3 273.9 Q393.3 276.4 396.3 279.4 Q390.3 280.9 384.3 279.4Z M388.3 278.4h4" fill="none" stroke="#e8e8ff" stroke-width="0.9"/><path d="M390.3 256.4 V262.9 M385.3 264.9 L393.3 268.9 L388.3 272.9 M378.3 261.9 L390.3 274.9 L402.3 261.9 M376.3 255.9 L382.8 270.9 M404.3 255.9 L397.8 270.9 M383.3 249.9 L376.3 251.9 M397.3 249.9 L404.3 251.9" fill="none" stroke="#ff9040" stroke-width="0.9" stroke-dasharray="2 2"/><circle cx="441.7" cy="260.9" r="25.2" fill="none" stroke="#e8e8ff" stroke-width="1"/><circle cx="441.7" cy="249.4" r="7" fill="none" stroke="#e8e8ff" stroke-width="1"/><circle cx="441.7" cy="249.4" r="5.6" fill="none" stroke="#e8e8ff" stroke-width="1"/><circle cx="441.7" cy="249.4" r="4.2" fill="none" stroke="#e8e8ff" stroke-width="1"/><circle cx="441.7" cy="249.4" r="2.8" fill="none" stroke="#e8e8ff" stroke-width="1"/><circle cx="441.7" cy="249.4" r="1.4" fill="none" stroke="#e8e8ff" stroke-width="1"/><path d="M435.7 249.4h12M441.7 243.4v12" stroke="#ff9040" stroke-width="0.8" stroke-dasharray="2 1.5"/><path d="M429.7 247.4 L424.2 255.4 L430.7 255.9Z M429.2 250.9 L426.7 254.4 L429.7 254.4Z" fill="none" stroke="#e8e8ff" stroke-width="1"/><path d="M453.7 247.4 L459.2 255.4 L452.7 255.9Z M454.2 250.9 L456.7 254.4 L453.7 254.4Z" fill="none" stroke="#e8e8ff" stroke-width="1"/><rect x="428.5" y="260.7" width="2.4" height="2.4" fill="#e8e8ff"/><rect x="440.5" y="259.2" width="2.4" height="2.4" fill="#e8e8ff"/><rect x="452.5" y="260.7" width="2.4" height="2.4" fill="#e8e8ff"/><rect x="433.0" y="269.7" width="2.4" height="2.4" fill="#e8e8ff"/><rect x="448.0" y="269.7" width="2.4" height="2.4" fill="#e8e8ff"/><path d="M435.7 279.4 Q438.7 276.4 441.7 273.9 Q444.7 276.4 447.7 279.4 Q441.7 280.9 435.7 279.4Z M439.7 278.4h4" fill="none" stroke="#e8e8ff" stroke-width="0.9"/><path d="M441.7 256.4 V262.9 M436.7 264.9 L444.7 268.9 L439.7 272.9 M429.7 261.9 L441.7 274.9 L453.7 261.9 M427.7 255.9 L434.2 270.9 M455.7 255.9 L449.2 270.9 M434.7 249.9 L427.7 251.9 M448.7 249.9 L455.7 251.9" fill="none" stroke="#ff9040" stroke-width="0.9" stroke-dasharray="2 2"/><circle cx="493.1" cy="260.9" r="25.2" fill="none" stroke="#e8e8ff" stroke-width="1"/><circle cx="493.1" cy="249.4" r="7" fill="none" stroke="#e8e8ff" stroke-width="1"/><circle cx="493.1" cy="249.4" r="5.6" fill="none" stroke="#e8e8ff" stroke-width="1"/><circle cx="493.1" cy="249.4" r="4.2" fill="none" stroke="#e8e8ff" stroke-width="1"/><circle cx="493.1" cy="249.4" r="2.8" fill="none" stroke="#e8e8ff" stroke-width="1"/><circle cx="493.1" cy="249.4" r="1.4" fill="none" stroke="#e8e8ff" stroke-width="1"/><path d="M487.1 249.4h12M493.1 243.4v12" stroke="#ff9040" stroke-width="0.8" stroke-dasharray="2 1.5"/><path d="M481.1 247.4 L475.6 255.4 L482.1 255.9Z M480.6 250.9 L478.1 254.4 L481.1 254.4Z" fill="none" stroke="#e8e8ff" stroke-width="1"/><path d="M505.1 247.4 L510.6 255.4 L504.1 255.9Z M505.6 250.9 L508.1 254.4 L505.1 254.4Z" fill="none" stroke="#e8e8ff" stroke-width="1"/><rect x="479.9" y="260.7" width="2.4" height="2.4" fill="#e8e8ff"/><rect x="491.9" y="259.2" width="2.4" height="2.4" fill="#e8e8ff"/><rect x="503.9" y="260.7" width="2.4" height="2.4" fill="#e8e8ff"/><rect x="484.4" y="269.7" width="2.4" height="2.4" fill="#e8e8ff"/><rect x="499.4" y="269.7" width="2.4" height="2.4" fill="#e8e8ff"/><path d="M487.1 279.4 Q490.1 276.4 493.1 273.9 Q496.1 276.4 499.1 279.4 Q493.1 280.9 487.1 279.4Z M491.1 278.4h4" fill="none" stroke="#e8e8ff" stroke-width="0.9"/><path d="M493.1 256.4 V262.9 M488.1 264.9 L496.1 268.9 L491.1 272.9 M481.1 261.9 L493.1 274.9 L505.1 261.9 M479.1 255.9 L485.6 270.9 M507.1 255.9 L500.6 270.9 M486.1 249.9 L479.1 251.9 M500.1 249.9 L507.1 251.9" fill="none" stroke="#ff9040" stroke-width="0.9" stroke-dasharray="2 2"/><circle cx="544.5" cy="260.9" r="25.2" fill="none" stroke="#e8e8ff" stroke-width="1"/><circle cx="544.5" cy="249.4" r="7" fill="none" stroke="#e8e8ff" stroke-width="1"/><circle cx="544.5" cy="249.4" r="5.6" fill="none" stroke="#e8e8ff" stroke-width="1"/><circle cx="544.5" cy="249.4" r="4.2" fill="none" stroke="#e8e8ff" stroke-width="1"/><circle cx="544.5" cy="249.4" r="2.8" fill="none" stroke="#e8e8ff" stroke-width="1"/><circle cx="544.5" cy="249.4" r="1.4" fill="none" stroke="#e8e8ff" stroke-width="1"/><path d="M538.5 249.4h12M544.5 243.4v12" stroke="#ff9040" stroke-width="0.8" stroke-dasharray="2 1.5"/><path d="M532.5 247.4 L527.0 255.4 L533.5 255.9Z M532.0 250.9 L529.5 254.4 L532.5 254.4Z" fill="none" stroke="#e8e8ff" stroke-width="1"/><path d="M556.5 247.4 L562.0 255.4 L555.5 255.9Z M557.0 250.9 L559.5 254.4 L556.5 254.4Z" fill="none" stroke="#e8e8ff" stroke-width="1"/><rect x="531.3" y="260.7" width="2.4" height="2.4" fill="#e8e8ff"/><rect x="543.3" y="259.2" width="2.4" height="2.4" fill="#e8e8ff"/><rect x="555.3" y="260.7" width="2.4" height="2.4" fill="#e8e8ff"/><rect x="535.8" y="269.7" width="2.4" height="2.4" fill="#e8e8ff"/><rect x="550.8" y="269.7" width="2.4" height="2.4" fill="#e8e8ff"/><path d="M538.5 279.4 Q541.5 276.4 544.5 273.9 Q547.5 276.4 550.5 279.4 Q544.5 280.9 538.5 279.4Z M542.5 278.4h4" fill="none" stroke="#e8e8ff" stroke-width="0.9"/><path d="M544.5 256.4 V262.9 M539.5 264.9 L547.5 268.9 L542.5 272.9 M532.5 261.9 L544.5 274.9 L556.5 261.9 M530.5 255.9 L537.0 270.9 M558.5 255.9 L552.0 270.9 M537.5 249.9 L530.5 251.9 M551.5 249.9 L558.5 251.9" fill="none" stroke="#ff9040" stroke-width="0.9" stroke-dasharray="2 2"/><circle cx="390.3" cy="312.2" r="25.2" fill="none" stroke="#e8e8ff" stroke-width="1"/><circle cx="390.3" cy="300.7" r="7" fill="none" stroke="#e8e8ff" stroke-width="1"/><circle cx="390.3" cy="300.7" r="5.6" fill="none" stroke="#e8e8ff" stroke-width="1"/><circle cx="390.3" cy="300.7" r="4.2" fill="none" stroke="#e8e8ff" stroke-width="1"/><circle cx="390.3" cy="300.7" r="2.8" fill="none" stroke="#e8e8ff" stroke-width="1"/><circle cx="390.3" cy="300.7" r="1.4" fill="none" stroke="#e8e8ff" stroke-width="1"/><path d="M384.3 300.7h12M390.3 294.7v12" stroke="#ff9040" stroke-width="0.8" stroke-dasharray="2 1.5"/><path d="M378.3 298.7 L372.8 306.7 L379.3 307.2Z M377.8 302.2 L375.3 305.7 L378.3 305.7Z" fill="none" stroke="#e8e8ff" stroke-width="1"/><path d="M402.3 298.7 L407.8 306.7 L401.3 307.2Z M402.8 302.2 L405.3 305.7 L402.3 305.7Z" fill="none" stroke="#e8e8ff" stroke-width="1"/><rect x="377.1" y="312.0" width="2.4" height="2.4" fill="#e8e8ff"/><rect x="389.1" y="310.5" width="2.4" height="2.4" fill="#e8e8ff"/><rect x="401.1" y="312.0" width="2.4" height="2.4" fill="#e8e8ff"/><rect x="381.6" y="321.0" width="2.4" height="2.4" fill="#e8e8ff"/><rect x="396.6" y="321.0" width="2.4" height="2.4" fill="#e8e8ff"/><path d="M384.3 330.7 Q387.3 327.7 390.3 325.2 Q393.3 327.7 396.3 330.7 Q390.3 332.2 384.3 330.7Z M388.3 329.7h4" fill="none" stroke="#e8e8ff" stroke-width="0.9"/><path d="M390.3 307.7 V314.2 M385.3 316.2 L393.3 320.2 L388.3 324.2 M378.3 313.2 L390.3 326.2 L402.3 313.2 M376.3 307.2 L382.8 322.2 M404.3 307.2 L397.8 322.2 M383.3 301.2 L376.3 303.2 M397.3 301.2 L404.3 303.2" fill="none" stroke="#ff9040" stroke-width="0.9" stroke-dasharray="2 2"/><circle cx="441.7" cy="312.2" r="25.2" fill="none" stroke="#e8e8ff" stroke-width="1"/><circle cx="441.7" cy="300.7" r="7" fill="none" stroke="#e8e8ff" stroke-width="1"/><circle cx="441.7" cy="300.7" r="5.6" fill="none" stroke="#e8e8ff" stroke-width="1"/><circle cx="441.7" cy="300.7" r="4.2" fill="none" stroke="#e8e8ff" stroke-width="1"/><circle cx="441.7" cy="300.7" r="2.8" fill="none" stroke="#e8e8ff" stroke-width="1"/><circle cx="441.7" cy="300.7" r="1.4" fill="none" stroke="#e8e8ff" stroke-width="1"/><path d="M435.7 300.7h12M441.7 294.7v12" stroke="#ff9040" stroke-width="0.8" stroke-dasharray="2 1.5"/><path d="M429.7 298.7 L424.2 306.7 L430.7 307.2Z M429.2 302.2 L426.7 305.7 L429.7 305.7Z" fill="none" stroke="#e8e8ff" stroke-width="1"/><path d="M453.7 298.7 L459.2 306.7 L452.7 307.2Z M454.2 302.2 L456.7 305.7 L453.7 305.7Z" fill="none" stroke="#e8e8ff" stroke-width="1"/><rect x="428.5" y="312.0" width="2.4" height="2.4" fill="#e8e8ff"/><rect x="440.5" y="310.5" width="2.4" height="2.4" fill="#e8e8ff"/><rect x="452.5" y="312.0" width="2.4" height="2.4" fill="#e8e8ff"/><rect x="433.0" y="321.0" width="2.4" height="2.4" fill="#e8e8ff"/><rect x="448.0" y="321.0" width="2.4" height="2.4" fill="#e8e8ff"/><path d="M435.7 330.7 Q438.7 327.7 441.7 325.2 Q444.7 327.7 447.7 330.7 Q441.7 332.2 435.7 330.7Z M439.7 329.7h4" fill="none" stroke="#e8e8ff" stroke-width="0.9"/><path d="M441.7 307.7 V314.2 M436.7 316.2 L444.7 320.2 L439.7 324.2 M429.7 313.2 L441.7 326.2 L453.7 313.2 M427.7 307.2 L434.2 322.2 M455.7 307.2 L449.2 322.2 M434.7 301.2 L427.7 303.2 M448.7 301.2 L455.7 303.2" fill="none" stroke="#ff9040" stroke-width="0.9" stroke-dasharray="2 2"/><circle cx="493.1" cy="312.2" r="25.2" fill="none" stroke="#e8e8ff" stroke-width="1"/><circle cx="493.1" cy="300.7" r="7" fill="none" stroke="#e8e8ff" stroke-width="1"/><circle cx="493.1" cy="300.7" r="5.6" fill="none" stroke="#e8e8ff" stroke-width="1"/><circle cx="493.1" cy="300.7" r="4.2" fill="none" stroke="#e8e8ff" stroke-width="1"/><circle cx="493.1" cy="300.7" r="2.8" fill="none" stroke="#e8e8ff" stroke-width="1"/><circle cx="493.1" cy="300.7" r="1.4" fill="none" stroke="#e8e8ff" stroke-width="1"/><path d="M487.1 300.7h12M493.1 294.7v12" stroke="#ff9040" stroke-width="0.8" stroke-dasharray="2 1.5"/><path d="M481.1 298.7 L475.6 306.7 L482.1 307.2Z M480.6 302.2 L478.1 305.7 L481.1 305.7Z" fill="none" stroke="#e8e8ff" stroke-width="1"/><path d="M505.1 298.7 L510.6 306.7 L504.1 307.2Z M505.6 302.2 L508.1 305.7 L505.1 305.7Z" fill="none" stroke="#e8e8ff" stroke-width="1"/><rect x="479.9" y="312.0" width="2.4" height="2.4" fill="#e8e8ff"/><rect x="491.9" y="310.5" width="2.4" height="2.4" fill="#e8e8ff"/><rect x="503.9" y="312.0" width="2.4" height="2.4" fill="#e8e8ff"/><rect x="484.4" y="321.0" width="2.4" height="2.4" fill="#e8e8ff"/><rect x="499.4" y="321.0" width="2.4" height="2.4" fill="#e8e8ff"/><path d="M487.1 330.7 Q490.1 327.7 493.1 325.2 Q496.1 327.7 499.1 330.7 Q493.1 332.2 487.1 330.7Z M491.1 329.7h4" fill="none" stroke="#e8e8ff" stroke-width="0.9"/><path d="M493.1 307.7 V314.2 M488.1 316.2 L496.1 320.2 L491.1 324.2 M481.1 313.2 L493.1 326.2 L505.1 313.2 M479.1 307.2 L485.6 322.2 M507.1 307.2 L500.6 322.2 M486.1 301.2 L479.1 303.2 M500.1 301.2 L507.1 303.2" fill="none" stroke="#ff9040" stroke-width="0.9" stroke-dasharray="2 2"/><circle cx="544.5" cy="312.2" r="25.2" fill="none" stroke="#e8e8ff" stroke-width="1"/><circle cx="544.5" cy="300.7" r="7" fill="none" stroke="#e8e8ff" stroke-width="1"/><circle cx="544.5" cy="300.7" r="5.6" fill="none" stroke="#e8e8ff" stroke-width="1"/><circle cx="544.5" cy="300.7" r="4.2" fill="none" stroke="#e8e8ff" stroke-width="1"/><circle cx="544.5" cy="300.7" r="2.8" fill="none" stroke="#e8e8ff" stroke-width="1"/><circle cx="544.5" cy="300.7" r="1.4" fill="none" stroke="#e8e8ff" stroke-width="1"/><path d="M538.5 300.7h12M544.5 294.7v12" stroke="#ff9040" stroke-width="0.8" stroke-dasharray="2 1.5"/><path d="M532.5 298.7 L527.0 306.7 L533.5 307.2Z M532.0 302.2 L529.5 305.7 L532.5 305.7Z" fill="none" stroke="#e8e8ff" stroke-width="1"/><path d="M556.5 298.7 L562.0 306.7 L555.5 307.2Z M557.0 302.2 L559.5 305.7 L556.5 305.7Z" fill="none" stroke="#e8e8ff" stroke-width="1"/><rect x="531.3" y="312.0" width="2.4" height="2.4" fill="#e8e8ff"/><rect x="543.3" y="310.5" width="2.4" height="2.4" fill="#e8e8ff"/><rect x="555.3" y="312.0" width="2.4" height="2.4" fill="#e8e8ff"/><rect x="535.8" y="321.0" width="2.4" height="2.4" fill="#e8e8ff"/><rect x="550.8" y="321.0" width="2.4" height="2.4" fill="#e8e8ff"/><path d="M538.5 330.7 Q541.5 327.7 544.5 325.2 Q547.5 327.7 550.5 330.7 Q544.5 332.2 538.5 330.7Z M542.5 329.7h4" fill="none" stroke="#e8e8ff" stroke-width="0.9"/><path d="M544.5 307.7 V314.2 M539.5 316.2 L547.5 320.2 L542.5 324.2 M532.5 313.2 L544.5 326.2 L556.5 313.2 M530.5 307.2 L537.0 322.2 M558.5 307.2 L552.0 322.2 M537.5 301.2 L530.5 303.2 M551.5 301.2 L558.5 303.2" fill="none" stroke="#ff9040" stroke-width="0.9" stroke-dasharray="2 2"/><g id="P1"><rect x="373.40000000000003" y="346.40000000000003" width="2.4" height="2.4" fill="#e8e8ff"/><rect x="399.3" y="373.5" width="2.4" height="2.4" fill="#e8e8ff"/><rect x="501.0" y="371.3" width="2.4" height="2.4" fill="#e8e8ff"/><rect x="448.8" y="383.1" width="2.4" height="2.4" fill="#e8e8ff"/><rect x="546.5999999999999" y="383.0" width="2.4" height="2.4" fill="#e8e8ff"/><rect x="404.3" y="417.1" width="2.4" height="2.4" fill="#e8e8ff"/><rect x="421.40000000000003" y="409.40000000000003" width="2.4" height="2.4" fill="#e8e8ff"/><rect x="540.3" y="418.40000000000003" width="2.4" height="2.4" fill="#e8e8ff"/><path d="M374.0 340.4 C376.2 340.2 380.1 340.5 382.4 341.0 C384.7 341.5 385.9 343.2 388.0 343.5 C390.1 343.8 392.3 342.7 395.0 342.6 C397.7 342.5 400.8 342.3 404.0 342.8 C407.2 343.3 411.0 344.3 414.0 345.5 C417.0 346.7 419.7 348.3 422.0 350.0 C424.3 351.7 425.7 354.2 428.0 355.5 C430.3 356.8 432.5 357.1 436.0 357.6 C439.5 358.1 443.9 358.5 449.0 358.3 C454.1 358.1 461.6 358.2 466.5 356.6 C471.4 355.1 474.8 351.4 478.5 349.0 C482.2 346.6 484.8 343.7 489.0 342.0 C493.2 340.3 499.2 338.9 504.0 338.6 C508.8 338.3 513.5 338.8 518.0 340.3 C522.5 341.8 527.8 344.2 531.0 347.5 C534.2 350.8 534.2 357.1 537.0 360.0 C539.8 362.9 544.2 363.2 548.0 365.0 C551.8 366.8 556.9 367.4 560.0 370.5 C563.1 373.6 566.2 379.2 566.7 383.5 C567.2 387.8 565.4 392.6 562.8 396.0 C560.2 399.4 553.5 400.7 551.0 404.0 C548.5 407.3 548.7 412.6 547.5 416.0 C546.3 419.4 546.3 423.4 543.9 424.3 C541.5 425.2 537.5 422.8 533.0 421.2 C528.5 419.6 523.8 416.7 517.2 414.9 C510.6 413.1 501.5 411.4 493.6 410.2 C485.7 409.0 476.6 407.7 470.0 407.8 C463.4 407.9 460.9 409.0 454.0 410.6 C447.1 412.2 436.3 415.2 428.6 417.5 C420.9 419.8 412.4 423.8 407.7 424.5 C403.0 425.2 403.1 423.4 400.5 421.5 C397.9 419.6 395.0 416.2 392.0 413.0 C389.0 409.8 385.2 405.7 382.4 402.3 C379.6 398.9 377.1 395.9 375.2 392.7 C373.3 389.5 372.0 386.6 371.0 383.0 C370.0 379.4 369.4 374.6 369.2 371.0 C369.0 367.4 369.4 364.3 369.8 361.4 C370.2 358.5 371.9 355.9 371.5 353.5 C371.1 351.1 367.9 348.9 367.5 347.0 C367.1 345.1 367.9 343.1 369.0 342.0 C370.1 340.9 371.8 340.6 374.0 340.4Z" fill="none" stroke="#e8e8ff" stroke-width="1"/><path d="M394.5 371.1L373.6 372.8A31.0 31.0 0 0 1 386.2 351.8ZM392.1 369.6L376.4 370.9A23.3 23.3 0 0 1 385.8 355.2ZM389.6 368.2L379.2 369.0A15.5 15.5 0 0 1 385.5 358.5ZM387.2 366.7L382.0 367.1A7.8 7.8 0 0 1 385.1 361.9ZM402.0 367.9L393.5 348.6A31.0 31.0 0 0 1 417.5 353.7ZM402.5 365.1L396.2 350.6A23.3 23.3 0 0 1 414.2 354.5ZM403.1 362.3L398.9 352.7A15.5 15.5 0 0 1 410.9 355.2ZM403.7 359.5L401.6 354.7A7.8 7.8 0 0 1 407.6 356.0ZM407.4 373.7L422.6 359.2A31.0 31.0 0 0 1 426.0 383.5ZM410.2 373.3L421.6 362.4A23.3 23.3 0 0 1 424.2 380.7ZM413.1 372.9L420.7 365.7A15.5 15.5 0 0 1 422.4 377.8ZM415.9 372.5L419.7 368.9A7.8 7.8 0 0 1 420.5 375.0ZM403.9 380.8L422.9 389.8A31.0 31.0 0 0 1 401.4 401.7ZM405.3 383.3L419.5 390.0A23.3 23.3 0 0 1 403.4 399.0ZM406.7 385.8L416.1 390.3A15.5 15.5 0 0 1 405.4 396.2ZM408.0 388.3L412.8 390.5A7.8 7.8 0 0 1 407.4 393.5ZM395.2 379.3L390.4 399.7A31.0 31.0 0 0 1 374.3 381.2ZM393.1 381.2L389.4 396.5A23.3 23.3 0 0 1 377.4 382.6ZM390.9 383.0L388.5 393.2A15.5 15.5 0 0 1 380.5 384.0ZM388.8 384.9L387.6 390.0A7.8 7.8 0 0 1 383.6 385.4ZM496.2 368.9L475.3 370.6A31.0 31.0 0 0 1 487.9 349.6ZM493.8 367.4L478.1 368.7A23.3 23.3 0 0 1 487.5 353.0ZM491.3 366.0L480.9 366.8A15.5 15.5 0 0 1 487.2 356.3ZM488.9 364.5L483.7 364.9A7.8 7.8 0 0 1 486.8 359.7ZM503.7 365.7L495.2 346.4A31.0 31.0 0 0 1 519.2 351.5ZM504.2 362.9L497.9 348.4A23.3 23.3 0 0 1 515.9 352.3ZM504.8 360.1L500.6 350.5A15.5 15.5 0 0 1 512.6 353.0ZM505.4 357.3L503.3 352.5A7.8 7.8 0 0 1 509.3 353.8ZM509.1 371.5L524.3 357.0A31.0 31.0 0 0 1 527.7 381.3ZM511.9 371.1L523.3 360.2A23.3 23.3 0 0 1 525.9 378.5ZM514.8 370.7L522.4 363.5A15.5 15.5 0 0 1 524.1 375.6ZM517.6 370.3L521.4 366.7A7.8 7.8 0 0 1 522.2 372.8ZM505.6 378.6L524.6 387.6A31.0 31.0 0 0 1 503.1 399.5ZM507.0 381.1L521.2 387.8A23.3 23.3 0 0 1 505.1 396.8ZM508.4 383.6L517.8 388.1A15.5 15.5 0 0 1 507.1 394.0ZM509.7 386.1L514.5 388.3A7.8 7.8 0 0 1 509.1 391.3ZM496.9 377.1L492.1 397.5A31.0 31.0 0 0 1 476.0 379.0ZM494.8 379.0L491.1 394.3A23.3 23.3 0 0 1 479.1 380.4ZM492.6 380.8L490.2 391.0A15.5 15.5 0 0 1 482.2 381.8ZM490.5 382.7L489.3 387.8A7.8 7.8 0 0 1 485.3 383.2ZM519.0 405.0L534.0 395.0L536.0 413.0ZM521.7 404.8L532.9 397.3L534.4 410.8ZM524.3 404.7L531.8 399.7L532.8 408.7ZM527.0 404.5L530.8 402.0L531.2 406.5ZM444.9 381.2L433.1 382.2A19.5 19.5 0 0 1 440.2 370.4ZM443.0 380.1L435.2 380.8A13.0 13.0 0 0 1 440.0 372.9ZM441.2 379.0L437.3 379.4A6.5 6.5 0 0 1 439.7 375.4ZM451.2 378.4L446.5 367.7A19.5 19.5 0 0 1 460.0 370.5ZM451.7 376.4L448.5 369.2A13.0 13.0 0 0 1 457.5 371.1ZM452.1 374.3L450.5 370.7A6.5 6.5 0 0 1 455.0 371.7ZM455.9 383.5L464.4 375.3A19.5 19.5 0 0 1 466.3 389.0ZM458.0 383.2L463.7 377.7A13.0 13.0 0 0 1 465.0 386.9ZM460.1 382.9L463.0 380.2A6.5 6.5 0 0 1 463.6 384.7ZM452.9 389.5L463.6 394.5A19.5 19.5 0 0 1 451.5 401.2ZM453.9 391.4L461.0 394.7A13.0 13.0 0 0 1 453.0 399.2ZM455.0 393.3L458.5 394.9A6.5 6.5 0 0 1 454.5 397.1ZM445.5 388.2L442.8 399.7A19.5 19.5 0 0 1 433.7 389.3ZM443.9 389.6L442.1 397.3A13.0 13.0 0 0 1 436.1 390.3ZM442.3 391.0L441.4 394.8A6.5 6.5 0 0 1 438.4 391.4Z" fill="none" stroke="#e8e8ff" stroke-width="0.95"/><path d="M547.1 374.2 A10 10 0 0 1 556.8 379.8 L553.6 381.4 A6.5 6.5 0 0 0 547.3 377.7ZM556.8 388.6 A10 10 0 0 1 547.1 394.2 L547.3 390.7 A6.5 6.5 0 0 0 553.6 387.0ZM539.5 389.8 A10 10 0 0 1 539.5 378.6 L542.4 380.6 A6.5 6.5 0 0 0 542.4 387.8ZM546.8 384.2h2" fill="none" stroke="#e8e8ff" stroke-width="1"/><path d="M374 346 L404 357 L416 372 L450 384 L502 372 L548 384 M386 365 L400 375 L409 390 M386 388 L400 375 M440 377 L456 396 M452 371 L440 394 M462 383 L520 370 M486 363 L505 354 M486 387 L512 390 L530 405 L544 418 M548 384 L544 418 M408 415 L450 384 M420 353 L452 371" fill="none" stroke="#ff9040" stroke-width="0.9" stroke-dasharray="2 2"/></g><g transform="translate(-5,86.5)"><rect x="373.40000000000003" y="346.40000000000003" width="2.4" height="2.4" fill="#e8e8ff"/><rect x="399.3" y="373.5" width="2.4" height="2.4" fill="#e8e8ff"/><rect x="501.0" y="371.3" width="2.4" height="2.4" fill="#e8e8ff"/><rect x="448.8" y="383.1" width="2.4" height="2.4" fill="#e8e8ff"/><rect x="546.5999999999999" y="383.0" width="2.4" height="2.4" fill="#e8e8ff"/><rect x="404.3" y="417.1" width="2.4" height="2.4" fill="#e8e8ff"/><rect x="421.40000000000003" y="409.40000000000003" width="2.4" height="2.4" fill="#e8e8ff"/><rect x="540.3" y="418.40000000000003" width="2.4" height="2.4" fill="#e8e8ff"/><path d="M374.0 340.4 C376.2 340.2 380.1 340.5 382.4 341.0 C384.7 341.5 385.9 343.2 388.0 343.5 C390.1 343.8 392.3 342.7 395.0 342.6 C397.7 342.5 400.8 342.3 404.0 342.8 C407.2 343.3 411.0 344.3 414.0 345.5 C417.0 346.7 419.7 348.3 422.0 350.0 C424.3 351.7 425.7 354.2 428.0 355.5 C430.3 356.8 432.5 357.1 436.0 357.6 C439.5 358.1 443.9 358.5 449.0 358.3 C454.1 358.1 461.6 358.2 466.5 356.6 C471.4 355.1 474.8 351.4 478.5 349.0 C482.2 346.6 484.8 343.7 489.0 342.0 C493.2 340.3 499.2 338.9 504.0 338.6 C508.8 338.3 513.5 338.8 518.0 340.3 C522.5 341.8 527.8 344.2 531.0 347.5 C534.2 350.8 534.2 357.1 537.0 360.0 C539.8 362.9 544.2 363.2 548.0 365.0 C551.8 366.8 556.9 367.4 560.0 370.5 C563.1 373.6 566.2 379.2 566.7 383.5 C567.2 387.8 565.4 392.6 562.8 396.0 C560.2 399.4 553.5 400.7 551.0 404.0 C548.5 407.3 548.7 412.6 547.5 416.0 C546.3 419.4 546.3 423.4 543.9 424.3 C541.5 425.2 537.5 422.8 533.0 421.2 C528.5 419.6 523.8 416.7 517.2 414.9 C510.6 413.1 501.5 411.4 493.6 410.2 C485.7 409.0 476.6 407.7 470.0 407.8 C463.4 407.9 460.9 409.0 454.0 410.6 C447.1 412.2 436.3 415.2 428.6 417.5 C420.9 419.8 412.4 423.8 407.7 424.5 C403.0 425.2 403.1 423.4 400.5 421.5 C397.9 419.6 395.0 416.2 392.0 413.0 C389.0 409.8 385.2 405.7 382.4 402.3 C379.6 398.9 377.1 395.9 375.2 392.7 C373.3 389.5 372.0 386.6 371.0 383.0 C370.0 379.4 369.4 374.6 369.2 371.0 C369.0 367.4 369.4 364.3 369.8 361.4 C370.2 358.5 371.9 355.9 371.5 353.5 C371.1 351.1 367.9 348.9 367.5 347.0 C367.1 345.1 367.9 343.1 369.0 342.0 C370.1 340.9 371.8 340.6 374.0 340.4Z" fill="none" stroke="#e8e8ff" stroke-width="1"/><path d="M394.5 371.1L373.6 372.8A31.0 31.0 0 0 1 386.2 351.8ZM392.1 369.6L376.4 370.9A23.3 23.3 0 0 1 385.8 355.2ZM389.6 368.2L379.2 369.0A15.5 15.5 0 0 1 385.5 358.5ZM387.2 366.7L382.0 367.1A7.8 7.8 0 0 1 385.1 361.9ZM402.0 367.9L393.5 348.6A31.0 31.0 0 0 1 417.5 353.7ZM402.5 365.1L396.2 350.6A23.3 23.3 0 0 1 414.2 354.5ZM403.1 362.3L398.9 352.7A15.5 15.5 0 0 1 410.9 355.2ZM403.7 359.5L401.6 354.7A7.8 7.8 0 0 1 407.6 356.0ZM407.4 373.7L422.6 359.2A31.0 31.0 0 0 1 426.0 383.5ZM410.2 373.3L421.6 362.4A23.3 23.3 0 0 1 424.2 380.7ZM413.1 372.9L420.7 365.7A15.5 15.5 0 0 1 422.4 377.8ZM415.9 372.5L419.7 368.9A7.8 7.8 0 0 1 420.5 375.0ZM403.9 380.8L422.9 389.8A31.0 31.0 0 0 1 401.4 401.7ZM405.3 383.3L419.5 390.0A23.3 23.3 0 0 1 403.4 399.0ZM406.7 385.8L416.1 390.3A15.5 15.5 0 0 1 405.4 396.2ZM408.0 388.3L412.8 390.5A7.8 7.8 0 0 1 407.4 393.5ZM395.2 379.3L390.4 399.7A31.0 31.0 0 0 1 374.3 381.2ZM393.1 381.2L389.4 396.5A23.3 23.3 0 0 1 377.4 382.6ZM390.9 383.0L388.5 393.2A15.5 15.5 0 0 1 380.5 384.0ZM388.8 384.9L387.6 390.0A7.8 7.8 0 0 1 383.6 385.4ZM496.2 368.9L475.3 370.6A31.0 31.0 0 0 1 487.9 349.6ZM493.8 367.4L478.1 368.7A23.3 23.3 0 0 1 487.5 353.0ZM491.3 366.0L480.9 366.8A15.5 15.5 0 0 1 487.2 356.3ZM488.9 364.5L483.7 364.9A7.8 7.8 0 0 1 486.8 359.7ZM503.7 365.7L495.2 346.4A31.0 31.0 0 0 1 519.2 351.5ZM504.2 362.9L497.9 348.4A23.3 23.3 0 0 1 515.9 352.3ZM504.8 360.1L500.6 350.5A15.5 15.5 0 0 1 512.6 353.0ZM505.4 357.3L503.3 352.5A7.8 7.8 0 0 1 509.3 353.8ZM509.1 371.5L524.3 357.0A31.0 31.0 0 0 1 527.7 381.3ZM511.9 371.1L523.3 360.2A23.3 23.3 0 0 1 525.9 378.5ZM514.8 370.7L522.4 363.5A15.5 15.5 0 0 1 524.1 375.6ZM517.6 370.3L521.4 366.7A7.8 7.8 0 0 1 522.2 372.8ZM505.6 378.6L524.6 387.6A31.0 31.0 0 0 1 503.1 399.5ZM507.0 381.1L521.2 387.8A23.3 23.3 0 0 1 505.1 396.8ZM508.4 383.6L517.8 388.1A15.5 15.5 0 0 1 507.1 394.0ZM509.7 386.1L514.5 388.3A7.8 7.8 0 0 1 509.1 391.3ZM496.9 377.1L492.1 397.5A31.0 31.0 0 0 1 476.0 379.0ZM494.8 379.0L491.1 394.3A23.3 23.3 0 0 1 479.1 380.4ZM492.6 380.8L490.2 391.0A15.5 15.5 0 0 1 482.2 381.8ZM490.5 382.7L489.3 387.8A7.8 7.8 0 0 1 485.3 383.2ZM519.0 405.0L534.0 395.0L536.0 413.0ZM521.7 404.8L532.9 397.3L534.4 410.8ZM524.3 404.7L531.8 399.7L532.8 408.7ZM527.0 404.5L530.8 402.0L531.2 406.5ZM444.9 381.2L433.1 382.2A19.5 19.5 0 0 1 440.2 370.4ZM443.0 380.1L435.2 380.8A13.0 13.0 0 0 1 440.0 372.9ZM441.2 379.0L437.3 379.4A6.5 6.5 0 0 1 439.7 375.4ZM451.2 378.4L446.5 367.7A19.5 19.5 0 0 1 460.0 370.5ZM451.7 376.4L448.5 369.2A13.0 13.0 0 0 1 457.5 371.1ZM452.1 374.3L450.5 370.7A6.5 6.5 0 0 1 455.0 371.7ZM455.9 383.5L464.4 375.3A19.5 19.5 0 0 1 466.3 389.0ZM458.0 383.2L463.7 377.7A13.0 13.0 0 0 1 465.0 386.9ZM460.1 382.9L463.0 380.2A6.5 6.5 0 0 1 463.6 384.7ZM452.9 389.5L463.6 394.5A19.5 19.5 0 0 1 451.5 401.2ZM453.9 391.4L461.0 394.7A13.0 13.0 0 0 1 453.0 399.2ZM455.0 393.3L458.5 394.9A6.5 6.5 0 0 1 454.5 397.1ZM445.5 388.2L442.8 399.7A19.5 19.5 0 0 1 433.7 389.3ZM443.9 389.6L442.1 397.3A13.0 13.0 0 0 1 436.1 390.3ZM442.3 391.0L441.4 394.8A6.5 6.5 0 0 1 438.4 391.4Z" fill="none" stroke="#e8e8ff" stroke-width="0.95"/><path d="M547.1 374.2 A10 10 0 0 1 556.8 379.8 L553.6 381.4 A6.5 6.5 0 0 0 547.3 377.7ZM556.8 388.6 A10 10 0 0 1 547.1 394.2 L547.3 390.7 A6.5 6.5 0 0 0 553.6 387.0ZM539.5 389.8 A10 10 0 0 1 539.5 378.6 L542.4 380.6 A6.5 6.5 0 0 0 542.4 387.8ZM546.8 384.2h2" fill="none" stroke="#e8e8ff" stroke-width="1"/><path d="M374 346 L404 357 L416 372 L450 384 L502 372 L548 384 M386 365 L400 375 L409 390 M386 388 L400 375 M440 377 L456 396 M452 371 L440 394 M462 383 L520 370 M486 363 L505 354 M486 387 L512 390 L530 405 L544 418 M548 384 L544 418 M408 415 L450 384 M420 353 L452 371" fill="none" stroke="#ff9040" stroke-width="0.9" stroke-dasharray="2 2"/></g><g transform="translate(928.5,172) scale(-1,1)"><rect x="373.40000000000003" y="346.40000000000003" width="2.4" height="2.4" fill="#e8e8ff"/><rect x="399.3" y="373.5" width="2.4" height="2.4" fill="#e8e8ff"/><rect x="501.0" y="371.3" width="2.4" height="2.4" fill="#e8e8ff"/><rect x="448.8" y="383.1" width="2.4" height="2.4" fill="#e8e8ff"/><rect x="546.5999999999999" y="383.0" width="2.4" height="2.4" fill="#e8e8ff"/><rect x="404.3" y="417.1" width="2.4" height="2.4" fill="#e8e8ff"/><rect x="421.40000000000003" y="409.40000000000003" width="2.4" height="2.4" fill="#e8e8ff"/><rect x="540.3" y="418.40000000000003" width="2.4" height="2.4" fill="#e8e8ff"/><path d="M374.0 340.4 C376.2 340.2 380.1 340.5 382.4 341.0 C384.7 341.5 385.9 343.2 388.0 343.5 C390.1 343.8 392.3 342.7 395.0 342.6 C397.7 342.5 400.8 342.3 404.0 342.8 C407.2 343.3 411.0 344.3 414.0 345.5 C417.0 346.7 419.7 348.3 422.0 350.0 C424.3 351.7 425.7 354.2 428.0 355.5 C430.3 356.8 432.5 357.1 436.0 357.6 C439.5 358.1 443.9 358.5 449.0 358.3 C454.1 358.1 461.6 358.2 466.5 356.6 C471.4 355.1 474.8 351.4 478.5 349.0 C482.2 346.6 484.8 343.7 489.0 342.0 C493.2 340.3 499.2 338.9 504.0 338.6 C508.8 338.3 513.5 338.8 518.0 340.3 C522.5 341.8 527.8 344.2 531.0 347.5 C534.2 350.8 534.2 357.1 537.0 360.0 C539.8 362.9 544.2 363.2 548.0 365.0 C551.8 366.8 556.9 367.4 560.0 370.5 C563.1 373.6 566.2 379.2 566.7 383.5 C567.2 387.8 565.4 392.6 562.8 396.0 C560.2 399.4 553.5 400.7 551.0 404.0 C548.5 407.3 548.7 412.6 547.5 416.0 C546.3 419.4 546.3 423.4 543.9 424.3 C541.5 425.2 537.5 422.8 533.0 421.2 C528.5 419.6 523.8 416.7 517.2 414.9 C510.6 413.1 501.5 411.4 493.6 410.2 C485.7 409.0 476.6 407.7 470.0 407.8 C463.4 407.9 460.9 409.0 454.0 410.6 C447.1 412.2 436.3 415.2 428.6 417.5 C420.9 419.8 412.4 423.8 407.7 424.5 C403.0 425.2 403.1 423.4 400.5 421.5 C397.9 419.6 395.0 416.2 392.0 413.0 C389.0 409.8 385.2 405.7 382.4 402.3 C379.6 398.9 377.1 395.9 375.2 392.7 C373.3 389.5 372.0 386.6 371.0 383.0 C370.0 379.4 369.4 374.6 369.2 371.0 C369.0 367.4 369.4 364.3 369.8 361.4 C370.2 358.5 371.9 355.9 371.5 353.5 C371.1 351.1 367.9 348.9 367.5 347.0 C367.1 345.1 367.9 343.1 369.0 342.0 C370.1 340.9 371.8 340.6 374.0 340.4Z" fill="none" stroke="#e8e8ff" stroke-width="1"/><path d="M394.5 371.1L373.6 372.8A31.0 31.0 0 0 1 386.2 351.8ZM392.1 369.6L376.4 370.9A23.3 23.3 0 0 1 385.8 355.2ZM389.6 368.2L379.2 369.0A15.5 15.5 0 0 1 385.5 358.5ZM387.2 366.7L382.0 367.1A7.8 7.8 0 0 1 385.1 361.9ZM402.0 367.9L393.5 348.6A31.0 31.0 0 0 1 417.5 353.7ZM402.5 365.1L396.2 350.6A23.3 23.3 0 0 1 414.2 354.5ZM403.1 362.3L398.9 352.7A15.5 15.5 0 0 1 410.9 355.2ZM403.7 359.5L401.6 354.7A7.8 7.8 0 0 1 407.6 356.0ZM407.4 373.7L422.6 359.2A31.0 31.0 0 0 1 426.0 383.5ZM410.2 373.3L421.6 362.4A23.3 23.3 0 0 1 424.2 380.7ZM413.1 372.9L420.7 365.7A15.5 15.5 0 0 1 422.4 377.8ZM415.9 372.5L419.7 368.9A7.8 7.8 0 0 1 420.5 375.0ZM403.9 380.8L422.9 389.8A31.0 31.0 0 0 1 401.4 401.7ZM405.3 383.3L419.5 390.0A23.3 23.3 0 0 1 403.4 399.0ZM406.7 385.8L416.1 390.3A15.5 15.5 0 0 1 405.4 396.2ZM408.0 388.3L412.8 390.5A7.8 7.8 0 0 1 407.4 393.5ZM395.2 379.3L390.4 399.7A31.0 31.0 0 0 1 374.3 381.2ZM393.1 381.2L389.4 396.5A23.3 23.3 0 0 1 377.4 382.6ZM390.9 383.0L388.5 393.2A15.5 15.5 0 0 1 380.5 384.0ZM388.8 384.9L387.6 390.0A7.8 7.8 0 0 1 383.6 385.4ZM496.2 368.9L475.3 370.6A31.0 31.0 0 0 1 487.9 349.6ZM493.8 367.4L478.1 368.7A23.3 23.3 0 0 1 487.5 353.0ZM491.3 366.0L480.9 366.8A15.5 15.5 0 0 1 487.2 356.3ZM488.9 364.5L483.7 364.9A7.8 7.8 0 0 1 486.8 359.7ZM503.7 365.7L495.2 346.4A31.0 31.0 0 0 1 519.2 351.5ZM504.2 362.9L497.9 348.4A23.3 23.3 0 0 1 515.9 352.3ZM504.8 360.1L500.6 350.5A15.5 15.5 0 0 1 512.6 353.0ZM505.4 357.3L503.3 352.5A7.8 7.8 0 0 1 509.3 353.8ZM509.1 371.5L524.3 357.0A31.0 31.0 0 0 1 527.7 381.3ZM511.9 371.1L523.3 360.2A23.3 23.3 0 0 1 525.9 378.5ZM514.8 370.7L522.4 363.5A15.5 15.5 0 0 1 524.1 375.6ZM517.6 370.3L521.4 366.7A7.8 7.8 0 0 1 522.2 372.8ZM505.6 378.6L524.6 387.6A31.0 31.0 0 0 1 503.1 399.5ZM507.0 381.1L521.2 387.8A23.3 23.3 0 0 1 505.1 396.8ZM508.4 383.6L517.8 388.1A15.5 15.5 0 0 1 507.1 394.0ZM509.7 386.1L514.5 388.3A7.8 7.8 0 0 1 509.1 391.3ZM496.9 377.1L492.1 397.5A31.0 31.0 0 0 1 476.0 379.0ZM494.8 379.0L491.1 394.3A23.3 23.3 0 0 1 479.1 380.4ZM492.6 380.8L490.2 391.0A15.5 15.5 0 0 1 482.2 381.8ZM490.5 382.7L489.3 387.8A7.8 7.8 0 0 1 485.3 383.2ZM519.0 405.0L534.0 395.0L536.0 413.0ZM521.7 404.8L532.9 397.3L534.4 410.8ZM524.3 404.7L531.8 399.7L532.8 408.7ZM527.0 404.5L530.8 402.0L531.2 406.5ZM444.9 381.2L433.1 382.2A19.5 19.5 0 0 1 440.2 370.4ZM443.0 380.1L435.2 380.8A13.0 13.0 0 0 1 440.0 372.9ZM441.2 379.0L437.3 379.4A6.5 6.5 0 0 1 439.7 375.4ZM451.2 378.4L446.5 367.7A19.5 19.5 0 0 1 460.0 370.5ZM451.7 376.4L448.5 369.2A13.0 13.0 0 0 1 457.5 371.1ZM452.1 374.3L450.5 370.7A6.5 6.5 0 0 1 455.0 371.7ZM455.9 383.5L464.4 375.3A19.5 19.5 0 0 1 466.3 389.0ZM458.0 383.2L463.7 377.7A13.0 13.0 0 0 1 465.0 386.9ZM460.1 382.9L463.0 380.2A6.5 6.5 0 0 1 463.6 384.7ZM452.9 389.5L463.6 394.5A19.5 19.5 0 0 1 451.5 401.2ZM453.9 391.4L461.0 394.7A13.0 13.0 0 0 1 453.0 399.2ZM455.0 393.3L458.5 394.9A6.5 6.5 0 0 1 454.5 397.1ZM445.5 388.2L442.8 399.7A19.5 19.5 0 0 1 433.7 389.3ZM443.9 389.6L442.1 397.3A13.0 13.0 0 0 1 436.1 390.3ZM442.3 391.0L441.4 394.8A6.5 6.5 0 0 1 438.4 391.4Z" fill="none" stroke="#e8e8ff" stroke-width="0.95"/><path d="M547.1 374.2 A10 10 0 0 1 556.8 379.8 L553.6 381.4 A6.5 6.5 0 0 0 547.3 377.7ZM556.8 388.6 A10 10 0 0 1 547.1 394.2 L547.3 390.7 A6.5 6.5 0 0 0 553.6 387.0ZM539.5 389.8 A10 10 0 0 1 539.5 378.6 L542.4 380.6 A6.5 6.5 0 0 0 542.4 387.8ZM546.8 384.2h2" fill="none" stroke="#e8e8ff" stroke-width="1"/><path d="M374 346 L404 357 L416 372 L450 384 L502 372 L548 384 M386 365 L400 375 L409 390 M386 388 L400 375 M440 377 L456 396 M452 371 L440 394 M462 383 L520 370 M486 363 L505 354 M486 387 L512 390 L530 405 L544 418 M548 384 L544 418 M408 415 L450 384 M420 353 L452 371" fill="none" stroke="#ff9040" stroke-width="0.9" stroke-dasharray="2 2"/></g><g transform="translate(934,255.5) scale(-1,1)"><rect x="373.40000000000003" y="346.40000000000003" width="2.4" height="2.4" fill="#e8e8ff"/><rect x="399.3" y="373.5" width="2.4" height="2.4" fill="#e8e8ff"/><rect x="501.0" y="371.3" width="2.4" height="2.4" fill="#e8e8ff"/><rect x="448.8" y="383.1" width="2.4" height="2.4" fill="#e8e8ff"/><rect x="546.5999999999999" y="383.0" width="2.4" height="2.4" fill="#e8e8ff"/><rect x="404.3" y="417.1" width="2.4" height="2.4" fill="#e8e8ff"/><rect x="421.40000000000003" y="409.40000000000003" width="2.4" height="2.4" fill="#e8e8ff"/><rect x="540.3" y="418.40000000000003" width="2.4" height="2.4" fill="#e8e8ff"/><path d="M374.0 340.4 C376.2 340.2 380.1 340.5 382.4 341.0 C384.7 341.5 385.9 343.2 388.0 343.5 C390.1 343.8 392.3 342.7 395.0 342.6 C397.7 342.5 400.8 342.3 404.0 342.8 C407.2 343.3 411.0 344.3 414.0 345.5 C417.0 346.7 419.7 348.3 422.0 350.0 C424.3 351.7 425.7 354.2 428.0 355.5 C430.3 356.8 432.5 357.1 436.0 357.6 C439.5 358.1 443.9 358.5 449.0 358.3 C454.1 358.1 461.6 358.2 466.5 356.6 C471.4 355.1 474.8 351.4 478.5 349.0 C482.2 346.6 484.8 343.7 489.0 342.0 C493.2 340.3 499.2 338.9 504.0 338.6 C508.8 338.3 513.5 338.8 518.0 340.3 C522.5 341.8 527.8 344.2 531.0 347.5 C534.2 350.8 534.2 357.1 537.0 360.0 C539.8 362.9 544.2 363.2 548.0 365.0 C551.8 366.8 556.9 367.4 560.0 370.5 C563.1 373.6 566.2 379.2 566.7 383.5 C567.2 387.8 565.4 392.6 562.8 396.0 C560.2 399.4 553.5 400.7 551.0 404.0 C548.5 407.3 548.7 412.6 547.5 416.0 C546.3 419.4 546.3 423.4 543.9 424.3 C541.5 425.2 537.5 422.8 533.0 421.2 C528.5 419.6 523.8 416.7 517.2 414.9 C510.6 413.1 501.5 411.4 493.6 410.2 C485.7 409.0 476.6 407.7 470.0 407.8 C463.4 407.9 460.9 409.0 454.0 410.6 C447.1 412.2 436.3 415.2 428.6 417.5 C420.9 419.8 412.4 423.8 407.7 424.5 C403.0 425.2 403.1 423.4 400.5 421.5 C397.9 419.6 395.0 416.2 392.0 413.0 C389.0 409.8 385.2 405.7 382.4 402.3 C379.6 398.9 377.1 395.9 375.2 392.7 C373.3 389.5 372.0 386.6 371.0 383.0 C370.0 379.4 369.4 374.6 369.2 371.0 C369.0 367.4 369.4 364.3 369.8 361.4 C370.2 358.5 371.9 355.9 371.5 353.5 C371.1 351.1 367.9 348.9 367.5 347.0 C367.1 345.1 367.9 343.1 369.0 342.0 C370.1 340.9 371.8 340.6 374.0 340.4Z" fill="none" stroke="#e8e8ff" stroke-width="1"/><path d="M394.5 371.1L373.6 372.8A31.0 31.0 0 0 1 386.2 351.8ZM392.1 369.6L376.4 370.9A23.3 23.3 0 0 1 385.8 355.2ZM389.6 368.2L379.2 369.0A15.5 15.5 0 0 1 385.5 358.5ZM387.2 366.7L382.0 367.1A7.8 7.8 0 0 1 385.1 361.9ZM402.0 367.9L393.5 348.6A31.0 31.0 0 0 1 417.5 353.7ZM402.5 365.1L396.2 350.6A23.3 23.3 0 0 1 414.2 354.5ZM403.1 362.3L398.9 352.7A15.5 15.5 0 0 1 410.9 355.2ZM403.7 359.5L401.6 354.7A7.8 7.8 0 0 1 407.6 356.0ZM407.4 373.7L422.6 359.2A31.0 31.0 0 0 1 426.0 383.5ZM410.2 373.3L421.6 362.4A23.3 23.3 0 0 1 424.2 380.7ZM413.1 372.9L420.7 365.7A15.5 15.5 0 0 1 422.4 377.8ZM415.9 372.5L419.7 368.9A7.8 7.8 0 0 1 420.5 375.0ZM403.9 380.8L422.9 389.8A31.0 31.0 0 0 1 401.4 401.7ZM405.3 383.3L419.5 390.0A23.3 23.3 0 0 1 403.4 399.0ZM406.7 385.8L416.1 390.3A15.5 15.5 0 0 1 405.4 396.2ZM408.0 388.3L412.8 390.5A7.8 7.8 0 0 1 407.4 393.5ZM395.2 379.3L390.4 399.7A31.0 31.0 0 0 1 374.3 381.2ZM393.1 381.2L389.4 396.5A23.3 23.3 0 0 1 377.4 382.6ZM390.9 383.0L388.5 393.2A15.5 15.5 0 0 1 380.5 384.0ZM388.8 384.9L387.6 390.0A7.8 7.8 0 0 1 383.6 385.4ZM496.2 368.9L475.3 370.6A31.0 31.0 0 0 1 487.9 349.6ZM493.8 367.4L478.1 368.7A23.3 23.3 0 0 1 487.5 353.0ZM491.3 366.0L480.9 366.8A15.5 15.5 0 0 1 487.2 356.3ZM488.9 364.5L483.7 364.9A7.8 7.8 0 0 1 486.8 359.7ZM503.7 365.7L495.2 346.4A31.0 31.0 0 0 1 519.2 351.5ZM504.2 362.9L497.9 348.4A23.3 23.3 0 0 1 515.9 352.3ZM504.8 360.1L500.6 350.5A15.5 15.5 0 0 1 512.6 353.0ZM505.4 357.3L503.3 352.5A7.8 7.8 0 0 1 509.3 353.8ZM509.1 371.5L524.3 357.0A31.0 31.0 0 0 1 527.7 381.3ZM511.9 371.1L523.3 360.2A23.3 23.3 0 0 1 525.9 378.5ZM514.8 370.7L522.4 363.5A15.5 15.5 0 0 1 524.1 375.6ZM517.6 370.3L521.4 366.7A7.8 7.8 0 0 1 522.2 372.8ZM505.6 378.6L524.6 387.6A31.0 31.0 0 0 1 503.1 399.5ZM507.0 381.1L521.2 387.8A23.3 23.3 0 0 1 505.1 396.8ZM508.4 383.6L517.8 388.1A15.5 15.5 0 0 1 507.1 394.0ZM509.7 386.1L514.5 388.3A7.8 7.8 0 0 1 509.1 391.3ZM496.9 377.1L492.1 397.5A31.0 31.0 0 0 1 476.0 379.0ZM494.8 379.0L491.1 394.3A23.3 23.3 0 0 1 479.1 380.4ZM492.6 380.8L490.2 391.0A15.5 15.5 0 0 1 482.2 381.8ZM490.5 382.7L489.3 387.8A7.8 7.8 0 0 1 485.3 383.2ZM519.0 405.0L534.0 395.0L536.0 413.0ZM521.7 404.8L532.9 397.3L534.4 410.8ZM524.3 404.7L531.8 399.7L532.8 408.7ZM527.0 404.5L530.8 402.0L531.2 406.5ZM444.9 381.2L433.1 382.2A19.5 19.5 0 0 1 440.2 370.4ZM443.0 380.1L435.2 380.8A13.0 13.0 0 0 1 440.0 372.9ZM441.2 379.0L437.3 379.4A6.5 6.5 0 0 1 439.7 375.4ZM451.2 378.4L446.5 367.7A19.5 19.5 0 0 1 460.0 370.5ZM451.7 376.4L448.5 369.2A13.0 13.0 0 0 1 457.5 371.1ZM452.1 374.3L450.5 370.7A6.5 6.5 0 0 1 455.0 371.7ZM455.9 383.5L464.4 375.3A19.5 19.5 0 0 1 466.3 389.0ZM458.0 383.2L463.7 377.7A13.0 13.0 0 0 1 465.0 386.9ZM460.1 382.9L463.0 380.2A6.5 6.5 0 0 1 463.6 384.7ZM452.9 389.5L463.6 394.5A19.5 19.5 0 0 1 451.5 401.2ZM453.9 391.4L461.0 394.7A13.0 13.0 0 0 1 453.0 399.2ZM455.0 393.3L458.5 394.9A6.5 6.5 0 0 1 454.5 397.1ZM445.5 388.2L442.8 399.7A19.5 19.5 0 0 1 433.7 389.3ZM443.9 389.6L442.1 397.3A13.0 13.0 0 0 1 436.1 390.3ZM442.3 391.0L441.4 394.8A6.5 6.5 0 0 1 438.4 391.4Z" fill="none" stroke="#e8e8ff" stroke-width="0.95"/><path d="M547.1 374.2 A10 10 0 0 1 556.8 379.8 L553.6 381.4 A6.5 6.5 0 0 0 547.3 377.7ZM556.8 388.6 A10 10 0 0 1 547.1 394.2 L547.3 390.7 A6.5 6.5 0 0 0 553.6 387.0ZM539.5 389.8 A10 10 0 0 1 539.5 378.6 L542.4 380.6 A6.5 6.5 0 0 0 542.4 387.8ZM546.8 384.2h2" fill="none" stroke="#e8e8ff" stroke-width="1"/><path d="M374 346 L404 357 L416 372 L450 384 L502 372 L548 384 M386 365 L400 375 L409 390 M386 388 L400 375 M440 377 L456 396 M452 371 L440 394 M462 383 L520 370 M486 363 L505 354 M486 387 L512 390 L530 405 L544 418 M548 384 L544 418 M408 415 L450 384 M420 353 L452 371" fill="none" stroke="#ff9040" stroke-width="0.9" stroke-dasharray="2 2"/></g><path d="M363.5 590 V708" stroke="#6a8a20" stroke-width="1" stroke-dasharray="14 3"/><path d="M279 680.5 H448" stroke="#909070" stroke-width="1" stroke-dasharray="14 6"/><path d="M361 584 L363.5 588 L366 584 M363.5 588 V591" stroke="#6a8a20" stroke-width="0.9" fill="none"/><path d="M279 667 L283 677 M283 667 L279 677" stroke="#909070" stroke-width="0.9"/><path d="M396 193 L443 192 L495 195 L550 197 M403.6 200 L443 227 M453.6 204 L493 227 M505 204 L544 227 M457 243 L510 246 L564 243 M404 255 L441 278 M468 305.7 L520 310 L564 313 M404 305 L441 327 L478 305 M389 190 V345 M441 277 V298 M544 226 V246 M492 277 V298 M544 277 V298 M376.8 347.9 L434 357.5 L548 383.6 M371.8 432.9 L429 442.5 L543 468.6 M385.7 320 L383 520 L378 600 L372 682 M400 420 L400 520 M403.6 416.4 L453.6 402 L492.9 391.4 M398.6 501.4 L448.6 487 L487.9 476.4 M453.6 330.7 L407 416 M467.9 330.7 L421.4 416 M448.6 415.7 L402 501 M462.9 415.7 L416.4 501 M492.9 370 L492.9 440 M535.7 388 L535.7 505.7 M530.7 473 L530.7 516 M400 510.7 L553.6 516 M373 500 L373 678 M369.6 520 L369.6 680 M380.4 553.6 L426.8 544.6 L478.6 555.4 L528.6 544.6 L553.6 517.9 M387.5 587.5 L426.8 544.6 M389 591 L559 603.6 M384 637.5 L432 628.6 L484 637.5 L534 628.6 L559 603.6 M393 675 L432 628.6 M510.7 666 L532 675 L534 628.6 M425 500 V596 M363.5 680.5 L378 640 M510 586 L487.5 587 L478.6 555.4" fill="none" stroke="#ff9040" stroke-width="0.9" stroke-dasharray="3 2.5"/></g></svg><div style="position:absolute;left:4px;top:715px;width:118px;height:10px;border-top:1px solid #808080;border-left:1px solid #808080;border-right:1px solid #fff;box-sizing:border-box"></div><div style="position:absolute;left:123px;top:715px;width:160px;height:10px;border-top:1px solid #808080;border-left:1px solid #808080;border-right:1px solid #fff;box-sizing:border-box"></div><div style="position:absolute;left:284px;top:715px;width:118px;height:10px;border-top:1px solid #808080;border-left:1px solid #808080;border-right:1px solid #fff;box-sizing:border-box"></div><div style="position:absolute;left:404px;top:715px;width:278px;height:10px;border-top:1px solid #808080;border-left:1px solid #808080;border-right:1px solid #fff;box-sizing:border-box"></div><div style="position:absolute;left:683px;top:715px;width:13px;height:10px;border-top:1px solid #808080;border-left:1px solid #808080;border-right:1px solid #fff;box-sizing:border-box"></div><div class="t" style="left:6px;top:716px;font-size:11px;line-height:12px">LineNo :</div><div class="t" style="left:61px;top:716px;font-size:11px;line-height:12px">0 /</div><div class="t" style="left:85px;top:716px;font-size:11px;line-height:12px">40400</div><div class="t" style="left:126px;top:716px;font-size:11px;line-height:12px">座標 :</div><div class="t" style="left:152px;top:716px;font-size:11px;line-height:12px">~</div><div class="t" style="left:197px;top:716px;font-size:11px;line-height:12px">~</div><div class="t" style="left:242px;top:716px;font-size:11px;line-height:12px">~</div><div class="t" style="left:287px;top:716px;font-size:11px;line-height:12px">拡大率(XY) :</div><div class="t" style="left:346px;top:716px;font-size:11px;line-height:12px">0.540</div><div style="position:absolute;left:0px;top:723px;width:700px;height:26px;background:#d4d0c8"></div><div style="position:absolute;left:0px;top:723px;width:700px;height:1px;background:#fff"></div><div style="position:absolute;left:0px;top:745px;width:700px;height:4px;background:#000"></div><div style="position:absolute;left:-24px;top:725px;width:61px;height:19px;background:#d4d0c8;border-top:1px solid #fff;border-left:1px solid #fff;border-right:1px solid #404040;border-bottom:1px solid #404040;box-sizing:border-box;box-shadow:inset -1px -1px 0 #808080"></div><div class="t" style="left:-1px;top:729px;font-size:10px;line-height:12px">COUN..</div><div style="position:absolute;left:40px;top:725px;width:57px;height:19px;background:#d4d0c8;border-top:1px solid #fff;border-left:1px solid #fff;border-right:1px solid #404040;border-bottom:1px solid #404040;box-sizing:border-box;box-shadow:inset -1px -1px 0 #808080"></div><div class="t" style="left:62px;top:729px;font-size:10px;line-height:12px">標準 -..</div><svg style="position:absolute;left:43px;top:727px" width="16" height="16" viewBox="0 0 16 16"><rect x="2" y="1" width="12" height="14" fill="#fff" stroke="#000"/><rect x="3" y="2" width="10" height="3" fill="#e02020"/><rect x="4" y="7" width="8" height="6" fill="#f0e000" stroke="#000"/></svg><div style="position:absolute;left:101px;top:725px;width:57px;height:19px;background:#d4d0c8;border-top:1px solid #fff;border-left:1px solid #fff;border-right:1px solid #404040;border-bottom:1px solid #404040;box-sizing:border-box;box-shadow:inset -1px -1px 0 #808080"></div><div class="t" style="left:123px;top:729px;font-size:10px;line-height:12px">EdMax..</div><svg style="position:absolute;left:104px;top:727px" width="16" height="16" viewBox="0 0 16 16"><rect x="1.5" y="2.5" width="13" height="9" fill="#fff" stroke="#404040"/><path d="M3 6 h7" stroke="#e04040"/><rect x="11" y="10" width="4" height="4" fill="#c000c0"/><rect x="11" y="4" width="3" height="3" fill="#40c0c0"/></svg><div style="position:absolute;left:162px;top:725px;width:57px;height:19px;background:#d4d0c8;border-top:1px solid #fff;border-left:1px solid #fff;border-right:1px solid #404040;border-bottom:1px solid #404040;box-sizing:border-box;box-shadow:inset -1px -1px 0 #808080"></div><div class="t" style="left:184px;top:729px;font-size:10px;line-height:12px">config..</div><svg style="position:absolute;left:165px;top:727px" width="16" height="16" viewBox="0 0 16 16"><path d="M3.5 1.5 h7 l3 3 v10 h-10 z" fill="#fff" stroke="#404040"/><rect x="5" y="5" width="3" height="3" fill="#c000c0"/><rect x="8" y="9" width="3" height="3" fill="#40c0c0"/></svg><div style="position:absolute;left:223px;top:725px;width:57px;height:19px;background:#d4d0c8;border-top:1px solid #fff;border-left:1px solid #fff;border-right:1px solid #404040;border-bottom:1px solid #404040;box-sizing:border-box;box-shadow:inset -1px -1px 0 #808080"></div><div class="t" style="left:245px;top:729px;font-size:10px;line-height:12px">ソース..</div><svg style="position:absolute;left:226px;top:727px" width="16" height="16" viewBox="0 0 16 16"><path d="M1.5 4.5 h5 l1 1.5 h7 v7.5 h-13 z" fill="#ffffa0" stroke="#000"/><path d="M1.5 7.5 h13" stroke="#c0c060"/></svg><div style="position:absolute;left:284px;top:725px;width:57px;height:19px;background:#d4d0c8;border-top:1px solid #fff;border-left:1px solid #fff;border-right:1px solid #404040;border-bottom:1px solid #404040;box-sizing:border-box;box-shadow:inset -1px -1px 0 #808080"></div><div class="t" style="left:306px;top:729px;font-size:10px;line-height:12px">2回目..</div><svg style="position:absolute;left:287px;top:727px" width="16" height="16" viewBox="0 0 16 16"><path d="M1.5 4.5 h5 l1 1.5 h7 v7.5 h-13 z" fill="#ffffa0" stroke="#000"/><path d="M1.5 7.5 h13" stroke="#c0c060"/></svg><div style="position:absolute;left:345px;top:725px;width:57px;height:19px;background:#d4d0c8;border-top:1px solid #fff;border-left:1px solid #fff;border-right:1px solid #404040;border-bottom:1px solid #404040;box-sizing:border-box;box-shadow:inset -1px -1px 0 #808080"></div><div class="t" style="left:367px;top:729px;font-size:10px;line-height:12px">Vector..</div><svg style="position:absolute;left:348px;top:727px" width="16" height="16" viewBox="0 0 16 16"><path d="M1 2 L7 14 L13 2" stroke="#2040c0" stroke-width="3" fill="none"/><path d="M9 5 q4 2 2 7" stroke="#e02020" stroke-width="2" fill="none"/></svg><div style="position:absolute;left:406px;top:725px;width:57px;height:19px;background:#d4d0c8;border-top:1px solid #fff;border-left:1px solid #fff;border-right:1px solid #404040;border-bottom:1px solid #404040;box-sizing:border-box;box-shadow:inset -1px -1px 0 #808080"></div><div class="t" style="left:428px;top:729px;font-size:10px;line-height:12px">ﾛﾎﾞｯﾄ..</div><svg style="position:absolute;left:409px;top:727px" width="16" height="16" viewBox="0 0 16 16"><circle cx="8" cy="8" r="6.5" fill="#e03020"/><path d="M8 8 L2.4 11.3 A6.5 6.5 0 0 0 10.5 14 z" fill="#20a040"/><path d="M8 8 L10.5 14 A6.5 6.5 0 0 0 14.5 8 L8 8z" fill="#f0c020"/><circle cx="8" cy="8" r="3" fill="#fff"/><circle cx="8" cy="8" r="2.2" fill="#3070e0"/></svg><div style="position:absolute;left:467px;top:725px;width:57px;height:19px;background:#d4d0c8;border-top:1px solid #fff;border-left:1px solid #fff;border-right:1px solid #404040;border-bottom:1px solid #404040;box-sizing:border-box;box-shadow:inset -1px -1px 0 #808080"></div><div class="t" style="left:489px;top:729px;font-size:10px;line-height:12px">ID78K..</div><svg style="position:absolute;left:470px;top:727px" width="16" height="16" viewBox="0 0 16 16"><rect x="1" y="1" width="14" height="14" fill="#204080"/><rect x="3" y="3" width="10" height="6" fill="#c0d0e0"/><rect x="3" y="10" width="10" height="3" fill="#808080"/></svg><div style="position:absolute;left:528px;top:725px;width:59px;height:19px;background:#d4d0c8;border-top:1px solid #fff;border-left:1px solid #fff;border-right:1px solid #404040;border-bottom:1px solid #404040;box-sizing:border-box;box-shadow:inset -1px -1px 0 #808080"></div><div class="t" style="left:550px;top:729px;font-size:10px;line-height:12px">safe_z_..</div><svg style="position:absolute;left:531px;top:727px" width="16" height="16" viewBox="0 0 16 16"><circle cx="8" cy="8" r="6.5" fill="#e03020"/><path d="M8 8 L2.4 11.3 A6.5 6.5 0 0 0 10.5 14 z" fill="#20a040"/><path d="M8 8 L10.5 14 A6.5 6.5 0 0 0 14.5 8 L8 8z" fill="#f0c020"/><circle cx="8" cy="8" r="3" fill="#fff"/><circle cx="8" cy="8" r="2.2" fill="#3070e0"/></svg><div style="position:absolute;left:590px;top:725px;width:58px;height:19px;background:#d4d0c8;border-top:1px solid #fff;border-left:1px solid #fff;border-right:1px solid #404040;border-bottom:1px solid #404040;box-sizing:border-box;box-shadow:inset -1px -1px 0 #808080"></div><div class="t" style="left:612px;top:729px;font-size:10px;line-height:12px">Mami_..</div><svg style="position:absolute;left:593px;top:727px" width="16" height="16" viewBox="0 0 16 16"><path d="M1.5 4.5 h5 l1 1.5 h7 v7.5 h-13 z" fill="#ffffa0" stroke="#000"/><path d="M1.5 7.5 h13" stroke="#c0c060"/></svg><div style="position:absolute;left:651px;top:725px;width:59px;height:19px;background:#d4d0c8;border-top:1px solid #fff;border-left:1px solid #fff;border-right:1px solid #404040;border-bottom:1px solid #404040;box-sizing:border-box;box-shadow:inset -1px -1px 0 #808080"></div><div class="t" style="left:673px;top:729px;font-size:10px;line-height:12px">img</div><svg style="position:absolute;left:654px;top:727px" width="16" height="16" viewBox="0 0 16 16"><path d="M1.5 4.5 h5 l1 1.5 h7 v7.5 h-13 z" fill="#ffffa0" stroke="#000"/><path d="M1.5 7.5 h13" stroke="#c0c060"/></svg>
</body></html>
